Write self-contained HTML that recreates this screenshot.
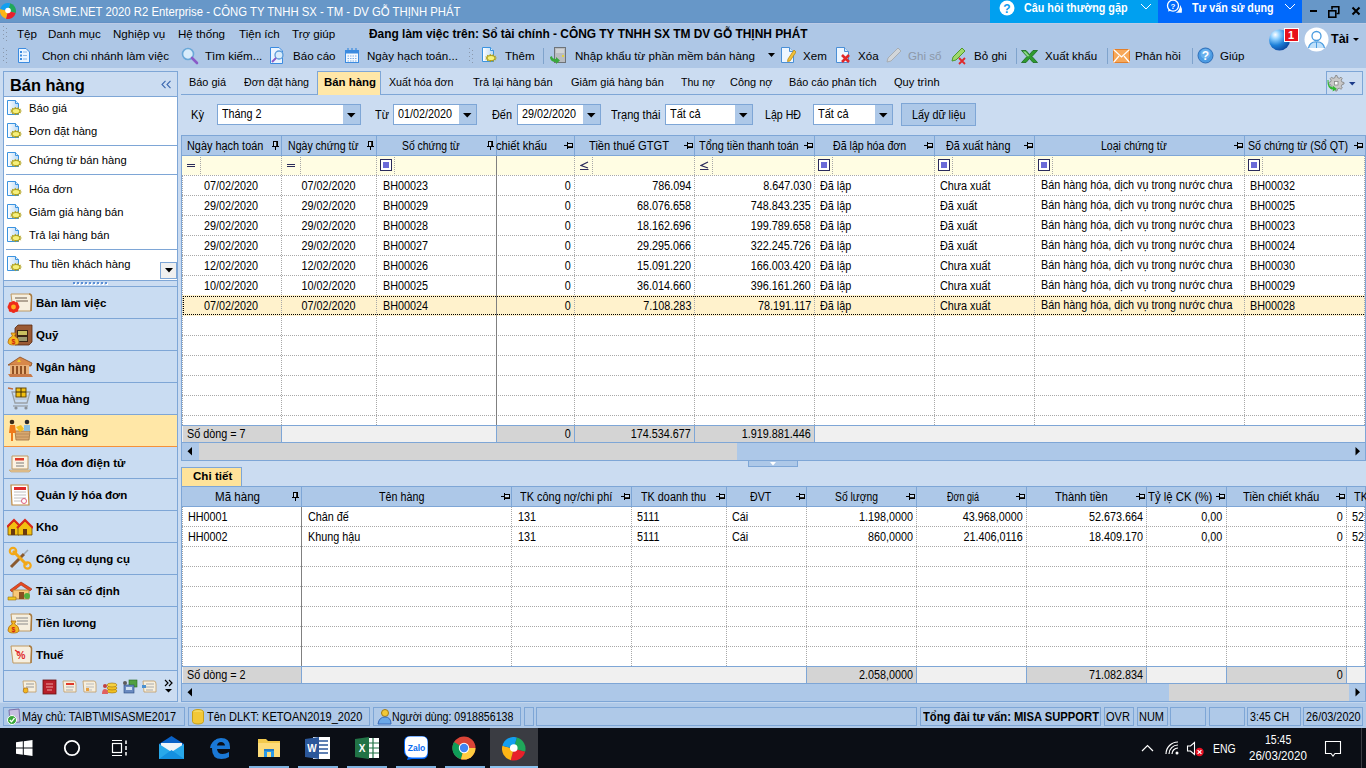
<!DOCTYPE html><html><head><meta charset="utf-8"><style>
*{margin:0;padding:0;box-sizing:border-box}
html,body{width:1366px;height:768px;overflow:hidden;background:#cbdcf1;font-family:"Liberation Sans",sans-serif;font-size:11px;color:#000}
div,span,svg{position:absolute}
span{white-space:nowrap;line-height:1}
.b{font-weight:bold}
.w{color:#fff}
</style></head><body><div style="left:0px;top:0px;width:1366px;height:23px;background:#6797c8"></div>
<div style="left:0px;top:22px;width:990px;height:1px;background:#6290c4"></div>
<svg style="left:0px;top:3px" width="17" height="17" viewBox="0 0 17 17"><g transform="rotate(15 8 8)"><path d="M8 8L8 0A8 8 0 0 1 16 8Z" fill="#1fa85a"/><path d="M8 8L16 8A8 8 0 0 1 8 16Z" fill="#e8202a"/><path d="M8 8L8 16A8 8 0 0 1 0 8Z" fill="#fdb515"/><path d="M8 8L0 8A8 8 0 0 1 8 0Z" fill="#139ff0"/></g><circle cx="8" cy="7.5" r="2.8" fill="#fff"/></svg>
<span style="left:22px;top:6px;font-size:12px;transform:scaleX(0.9435);transform-origin:0 0;color:#fff">MISA SME.NET 2020 R2 Enterprise - CÔNG TY TNHH SX - TM - DV GỖ THỊNH PHÁT</span>
<div style="left:990px;top:0px;width:168px;height:23px;background:#00a0f0"></div>
<div style="left:1158px;top:0px;width:144px;height:23px;background:#0069fc"></div>
<svg style="left:999px;top:0px" width="16" height="16"><circle cx="8" cy="8" r="7.5" fill="#fff"/><text x="8" y="12.5" font-size="12" font-weight="bold" text-anchor="middle" fill="#0d9bf0" font-family="Liberation Sans">?</text></svg>
<span class="b w" style="left:1023.5px;top:2px;font-size:12px;transform:scaleX(0.8985);transform-origin:0 0">Câu hỏi thường gặp</span>
<svg style="left:1140px;top:3px" width="12" height="8"><path d="M1 1L6 6L11 1" stroke="#fff" fill="none" stroke-width="1"/></svg>
<svg style="left:1166px;top:0px" width="18" height="14"><circle cx="7" cy="5.7" r="5.5" stroke="#fff" fill="none" stroke-width="1.3"/><path d="M2.8 8.8L2 11.5L5.8 10.6Z" fill="#fff"/><path d="M14.3 5Q16.8 9 15.8 12.8H9.5Q13.5 11 14.3 5Z" fill="#fff"/><text x="7" y="8.8" font-size="8" font-weight="bold" text-anchor="middle" fill="#fff" font-family="Liberation Sans">?</text></svg>
<span class="b w" style="left:1191.5px;top:2px;font-size:12px;transform:scaleX(0.8919);transform-origin:0 0">Tư vấn sử dụng</span>
<svg style="left:1284px;top:3px" width="12" height="8"><path d="M1 1L6 6L11 1" stroke="#fff" fill="none" stroke-width="1"/></svg>
<div style="left:1310px;top:10px;width:7px;height:2px;background:#000"></div>
<svg style="left:1327px;top:5px" width="14" height="13"><rect x="1.8" y="5.8" width="7" height="6.4" fill="none" stroke="#000" stroke-width="1.6"/><path d="M5 4.5V1.8H11.8V8.5H9.5" fill="none" stroke="#000" stroke-width="1.6"/></svg>
<svg style="left:1351px;top:6px" width="10" height="10"><path d="M1.5 1.5L8.5 8.5M8.5 1.5L1.5 8.5" stroke="#000" stroke-width="2"/></svg>
<div style="left:0px;top:23px;width:1366px;height:45px;background:#aec7e6"></div>
<div style="left:0px;top:23px;width:1366px;height:1px;background:#bccbe6"></div>
<div style="left:3px;top:26px;width:1px;height:1px;background:#8a98ac"></div>
<div style="left:6px;top:28px;width:1px;height:1px;background:#8a98ac"></div>
<div style="left:3px;top:30px;width:1px;height:1px;background:#8a98ac"></div>
<div style="left:6px;top:32px;width:1px;height:1px;background:#8a98ac"></div>
<div style="left:3px;top:34px;width:1px;height:1px;background:#8a98ac"></div>
<div style="left:6px;top:36px;width:1px;height:1px;background:#8a98ac"></div>
<div style="left:3px;top:38px;width:1px;height:1px;background:#8a98ac"></div>
<div style="left:6px;top:40px;width:1px;height:1px;background:#8a98ac"></div>
<div style="left:3px;top:48px;width:1px;height:1px;background:#8a98ac"></div>
<div style="left:6px;top:50px;width:1px;height:1px;background:#8a98ac"></div>
<div style="left:3px;top:52px;width:1px;height:1px;background:#8a98ac"></div>
<div style="left:6px;top:54px;width:1px;height:1px;background:#8a98ac"></div>
<div style="left:3px;top:56px;width:1px;height:1px;background:#8a98ac"></div>
<div style="left:6px;top:58px;width:1px;height:1px;background:#8a98ac"></div>
<div style="left:3px;top:60px;width:1px;height:1px;background:#8a98ac"></div>
<div style="left:6px;top:62px;width:1px;height:1px;background:#8a98ac"></div>
<span style="left:17px;top:28px;font-size:11.6px">Tệp</span>
<span style="left:48px;top:28px;font-size:11.6px">Danh mục</span>
<span style="left:113px;top:28px;font-size:11.6px">Nghiệp vụ</span>
<span style="left:178px;top:28px;font-size:11.6px">Hệ thống</span>
<span style="left:239px;top:28px;font-size:11.6px">Tiện ích</span>
<span style="left:292px;top:28px;font-size:11.6px">Trợ giúp</span>
<span class="b" style="left:369.4px;top:28px;font-size:12px;transform:scaleX(0.9927);transform-origin:0 0">Đang làm việc trên: Sổ tài chính - CÔNG TY TNHH SX TM DV GỖ THỊNH PHÁT</span>
<svg style="left:17px;top:47px" width="14" height="17"><path d="M1.5 1.5H9L12.5 5V15.5H1.5Z" fill="#eaf4ff" stroke="#3b8be0"/><rect x="3" y="4" width="2" height="2" fill="#3b8be0"/><rect x="3" y="7.5" width="2" height="2" fill="#3b8be0"/><rect x="3" y="11" width="2" height="2" fill="#3b8be0"/><path d="M6 5H10M6 8.5H10M6 12H10" stroke="#8ab8e8"/></svg>
<span style="left:42px;top:50px;font-size:11.6px">Chọn chi nhánh làm việc</span>
<span style="left:205px;top:50px;font-size:11.6px">Tìm kiếm...</span>
<span style="left:293px;top:50px;font-size:11.6px">Báo cáo</span>
<span style="left:367px;top:50px;font-size:11.6px">Ngày hạch toán...</span>
<span style="left:505px;top:50px;font-size:11.6px">Thêm</span>
<span style="left:575px;top:50px;font-size:11.6px">Nhập khẩu từ phần mềm bán hàng</span>
<span style="left:803px;top:50px;font-size:11.6px">Xem</span>
<span style="left:858px;top:50px;font-size:11.6px">Xóa</span>
<span style="left:974px;top:50px;font-size:11.6px">Bỏ ghi</span>
<span style="left:1045px;top:50px;font-size:11.6px">Xuất khẩu</span>
<span style="left:1135px;top:50px;font-size:11.6px">Phản hồi</span>
<span style="left:1220px;top:50px;font-size:11.6px">Giúp</span>
<span style="left:908px;top:50px;font-size:11.6px;color:#8c98a8">Ghi sổ</span>
<svg style="left:181px;top:47px" width="18" height="18"><circle cx="7" cy="7" r="5.5" fill="#d8ecfb" stroke="#6aa8d8" stroke-width="1.6"/><path d="M11 11L16 16" stroke="#8a5ac8" stroke-width="2.6" stroke-linecap="round"/></svg>
<svg style="left:269px;top:46px" width="17" height="19"><path d="M1.5 1.5H10L13.5 5V17.5H1.5Z" fill="#eaf4ff" stroke="#3b8be0"/><circle cx="10" cy="9" r="4" fill="#d8ecfb" stroke="#5a9ad8" stroke-width="1.3"/><path d="M7 12L3 16" stroke="#8a5ac8" stroke-width="2"/></svg>
<svg style="left:344px;top:47px" width="16" height="17"><rect x="1.5" y="3.5" width="13" height="12" fill="#f4f9ff" stroke="#3b8be0"/><rect x="1.5" y="3.5" width="13" height="3" fill="#3b8be0"/><path d="M4 1V5M8 1V5M12 1V5" stroke="#3b8be0" stroke-width="1.2"/><path d="M3.5 9H13M3.5 11.5H13M3.5 14H13" stroke="#7eb0e6" stroke-dasharray="1.5 1"/></svg>
<div style="left:469px;top:48px;width:1px;height:1px;background:#8a98ac"></div>
<div style="left:472px;top:50px;width:1px;height:1px;background:#8a98ac"></div>
<div style="left:469px;top:52px;width:1px;height:1px;background:#8a98ac"></div>
<div style="left:472px;top:54px;width:1px;height:1px;background:#8a98ac"></div>
<div style="left:469px;top:56px;width:1px;height:1px;background:#8a98ac"></div>
<div style="left:472px;top:58px;width:1px;height:1px;background:#8a98ac"></div>
<div style="left:469px;top:60px;width:1px;height:1px;background:#8a98ac"></div>
<div style="left:472px;top:62px;width:1px;height:1px;background:#8a98ac"></div>
<svg style="left:482px;top:47px" width="17" height="16"><defs><linearGradient id="dg" x1="0" x2="1"><stop offset="0" stop-color="#ffffff"/><stop offset="1" stop-color="#b8d8f6"/></linearGradient></defs><path d="M.5 .5H8.5L11.5 3.5V14.5H.5Z" fill="url(#dg)" stroke="#3b93e0"/><path d="M8.5 .5V3.5H11.5" fill="#d8ecfb" stroke="#3b93e0"/><path d="M15.30,11.00 L13.13,11.76 L14.30,13.32 L11.82,13.04 L11.62,14.91 L9.61,13.67 L8.10,15.26 L7.21,13.46 L4.87,14.25 L5.38,12.46 L2.96,12.21 L4.70,11.00 L2.96,9.79 L5.38,9.54 L4.87,7.75 L7.21,8.54 L8.10,6.74 L9.61,8.33 L11.62,7.09 L11.82,8.96 L14.30,8.68 L13.13,10.24Z" fill="#b0a018"/><ellipse cx="9" cy="11" rx="3.4" ry="2.1" fill="#f6f07a"/></svg>
<div style="left:543px;top:48px;width:1px;height:16px;background:#7fa3cc"></div>
<svg style="left:548px;top:46px" width="20" height="19"><rect x="6.5" y="1.5" width="11" height="15" fill="#b9bcc0" stroke="#6e7378"/><path d="M8 4H16M8 6H16" stroke="#e7e9ea"/><rect x="14" y="9" width="2" height="2" fill="#e6d23a"/><path d="M2 11 Q2 16 8 16L8 18L12 14.5L8 11V13Q4 13 4 10Z" fill="#39a83c"/></svg>
<svg style="left:768px;top:53px" width="8" height="5"><path d="M0 0H7L3.5 4Z" fill="#000"/></svg>
<svg style="left:780px;top:46px" width="16" height="18"><path d="M1.5 1.5H9.5L13.5 5.5V16.5H1.5Z" fill="#eef6ff" stroke="#4a8fd6"/><path d="M9.5 1.5V5.5H13.5" fill="#cfe3f7" stroke="#4a8fd6"/><path d="M8 13L14 4L16 6L10 15L7.5 15.5Z" fill="#f3c13a" stroke="#b88a14" stroke-width=".8"/></svg>
<svg style="left:835px;top:46px" width="16" height="18"><path d="M1.5 1.5H9.5L13.5 5.5V16.5H1.5Z" fill="#eef6ff" stroke="#4a8fd6"/><path d="M9.5 1.5V5.5H13.5" fill="#cfe3f7" stroke="#4a8fd6"/><path d="M7 9L14 16M14 9L7 16" stroke="#e0282a" stroke-width="2.6"/></svg>
<svg style="left:885px;top:46px" width="17" height="19"><path d="M2 16L3 12L13 2L16 5L6 15Z" fill="#d2d6da" stroke="#a7adb3"/></svg>
<svg style="left:950px;top:46px" width="18" height="20"><path d="M2 15L3 11L12 2L15 5L6 14Z" fill="#9fd86a" stroke="#4f9a2c"/><path d="M9 12L15 18M15 12L9 18" stroke="#e0282a" stroke-width="1.8"/></svg>
<div style="left:1016px;top:48px;width:1px;height:16px;background:#7fa3cc"></div>
<svg style="left:1021px;top:50px" width="18" height="13"><path d="M.5 .5H5L8.5 4.5L12 .5H16.5L11 6.5L16.5 12.5H12L8.5 8.5L5 12.5H.5L6 6.5Z" fill="#2f9a2f" stroke="#1a6a1a" stroke-width=".8"/><path d="M2 1.5H4.5L8.5 6L6.5 6.5Z" fill="#8fd88a"/></svg>
<div style="left:1107px;top:48px;width:1px;height:16px;background:#7fa3cc"></div>
<svg style="left:1113px;top:49px" width="17" height="14"><rect x=".5" y=".5" width="16" height="13" fill="#f7a85a" stroke="#e27f2a"/><path d="M.5 .5L8.5 8L16.5 .5M.5 13.5L6 7M16.5 13.5L11 7" stroke="#fff" fill="none" stroke-width="1.2"/></svg>
<div style="left:1192px;top:48px;width:1px;height:16px;background:#7fa3cc"></div>
<svg style="left:1197px;top:47px" width="17" height="17"><circle cx="8.5" cy="8.5" r="7.5" fill="#4b9be3" stroke="#2f6fb8"/><circle cx="8.5" cy="7" r="5" fill="#7ec0f5" opacity=".6"/><text x="8.5" y="13" font-size="12" font-weight="bold" text-anchor="middle" fill="#fff" font-family="Liberation Sans">?</text></svg>
<svg style="left:1268px;top:29px" width="24" height="22"><defs><radialGradient id="gl" cx=".3" cy=".25" r=".85"><stop offset="0" stop-color="#ffffff"/><stop offset=".25" stop-color="#8fd0ff"/><stop offset=".6" stop-color="#1c7fd8"/><stop offset="1" stop-color="#0a3f98"/></radialGradient></defs><circle cx="11.5" cy="11" r="10.5" fill="url(#gl)"/></svg>
<div style="left:1284px;top:28px;width:15px;height:14px;background:#e8101a;border:1px solid #fff"></div>
<span class="b" style="left:1288px;top:30px;font-size:11px;color:#fff">1</span>
<svg style="left:1304px;top:27px" width="25" height="25"><circle cx="12.5" cy="12.5" r="12" fill="#fff"/><circle cx="12.5" cy="9" r="4.5" fill="none" stroke="#4a9ce0" stroke-width="1.3"/><path d="M4.5 21Q6 14.5 12.5 15Q19 14.5 20.5 21" fill="#bfe0fa" stroke="#4a9ce0" stroke-width="1.2"/><path d="M12.5 15V21" stroke="#4a9ce0"/></svg>
<span class="b" style="left:1331px;top:33px;font-size:12.5px">Tài</span>
<svg style="left:1353px;top:38px" width="7" height="4"><path d="M0 0H6L3 3Z" fill="#000"/></svg>
<div style="left:3px;top:71px;width:175px;height:631px;background:#cbdcf1;border:1px solid #7ea6d6"></div>
<div style="left:4px;top:72px;width:173px;height:24px;background:#cbdcf1"></div>
<span class="b" style="left:10px;top:77px;font-size:16.4px">Bán hàng</span>
<svg style="left:161px;top:80px" width="11" height="9"><path d="M4.5 .8L1 4.5L4.5 8.2M9.5 .8L6 4.5L9.5 8.2" stroke="#3a67b0" fill="none" stroke-width="1.1"/></svg>
<div style="left:4px;top:96px;width:173px;height:1px;background:#7ea6d6"></div>
<div style="left:4px;top:97px;width:173px;height:184px;background:#fff"></div>
<svg style="left:7px;top:100px" width="17" height="16"><defs><linearGradient id="dg" x1="0" x2="1"><stop offset="0" stop-color="#ffffff"/><stop offset="1" stop-color="#b8d8f6"/></linearGradient></defs><path d="M.5 .5H8.5L11.5 3.5V14.5H.5Z" fill="url(#dg)" stroke="#3b93e0"/><path d="M8.5 .5V3.5H11.5" fill="#d8ecfb" stroke="#3b93e0"/><path d="M15.30,11.00 L13.13,11.76 L14.30,13.32 L11.82,13.04 L11.62,14.91 L9.61,13.67 L8.10,15.26 L7.21,13.46 L4.87,14.25 L5.38,12.46 L2.96,12.21 L4.70,11.00 L2.96,9.79 L5.38,9.54 L4.87,7.75 L7.21,8.54 L8.10,6.74 L9.61,8.33 L11.62,7.09 L11.82,8.96 L14.30,8.68 L13.13,10.24Z" fill="#b0a018"/><ellipse cx="9" cy="11" rx="3.4" ry="2.1" fill="#f6f07a"/></svg>
<span style="left:29px;top:103px;font-size:11.2px">Báo giá</span>
<svg style="left:7px;top:123px" width="17" height="16"><defs><linearGradient id="dg" x1="0" x2="1"><stop offset="0" stop-color="#ffffff"/><stop offset="1" stop-color="#b8d8f6"/></linearGradient></defs><path d="M.5 .5H8.5L11.5 3.5V14.5H.5Z" fill="url(#dg)" stroke="#3b93e0"/><path d="M8.5 .5V3.5H11.5" fill="#d8ecfb" stroke="#3b93e0"/><path d="M15.30,11.00 L13.13,11.76 L14.30,13.32 L11.82,13.04 L11.62,14.91 L9.61,13.67 L8.10,15.26 L7.21,13.46 L4.87,14.25 L5.38,12.46 L2.96,12.21 L4.70,11.00 L2.96,9.79 L5.38,9.54 L4.87,7.75 L7.21,8.54 L8.10,6.74 L9.61,8.33 L11.62,7.09 L11.82,8.96 L14.30,8.68 L13.13,10.24Z" fill="#b0a018"/><ellipse cx="9" cy="11" rx="3.4" ry="2.1" fill="#f6f07a"/></svg>
<span style="left:29px;top:126px;font-size:11.2px">Đơn đặt hàng</span>
<svg style="left:7px;top:152px" width="17" height="16"><defs><linearGradient id="dg" x1="0" x2="1"><stop offset="0" stop-color="#ffffff"/><stop offset="1" stop-color="#b8d8f6"/></linearGradient></defs><path d="M.5 .5H8.5L11.5 3.5V14.5H.5Z" fill="url(#dg)" stroke="#3b93e0"/><path d="M8.5 .5V3.5H11.5" fill="#d8ecfb" stroke="#3b93e0"/><path d="M15.30,11.00 L13.13,11.76 L14.30,13.32 L11.82,13.04 L11.62,14.91 L9.61,13.67 L8.10,15.26 L7.21,13.46 L4.87,14.25 L5.38,12.46 L2.96,12.21 L4.70,11.00 L2.96,9.79 L5.38,9.54 L4.87,7.75 L7.21,8.54 L8.10,6.74 L9.61,8.33 L11.62,7.09 L11.82,8.96 L14.30,8.68 L13.13,10.24Z" fill="#b0a018"/><ellipse cx="9" cy="11" rx="3.4" ry="2.1" fill="#f6f07a"/></svg>
<span style="left:29px;top:155px;font-size:11.2px">Chứng từ bán hàng</span>
<svg style="left:7px;top:181px" width="17" height="16"><defs><linearGradient id="dg" x1="0" x2="1"><stop offset="0" stop-color="#ffffff"/><stop offset="1" stop-color="#b8d8f6"/></linearGradient></defs><path d="M.5 .5H8.5L11.5 3.5V14.5H.5Z" fill="url(#dg)" stroke="#3b93e0"/><path d="M8.5 .5V3.5H11.5" fill="#d8ecfb" stroke="#3b93e0"/><path d="M15.30,11.00 L13.13,11.76 L14.30,13.32 L11.82,13.04 L11.62,14.91 L9.61,13.67 L8.10,15.26 L7.21,13.46 L4.87,14.25 L5.38,12.46 L2.96,12.21 L4.70,11.00 L2.96,9.79 L5.38,9.54 L4.87,7.75 L7.21,8.54 L8.10,6.74 L9.61,8.33 L11.62,7.09 L11.82,8.96 L14.30,8.68 L13.13,10.24Z" fill="#b0a018"/><ellipse cx="9" cy="11" rx="3.4" ry="2.1" fill="#f6f07a"/></svg>
<span style="left:29px;top:184px;font-size:11.2px">Hóa đơn</span>
<svg style="left:7px;top:204px" width="17" height="16"><defs><linearGradient id="dg" x1="0" x2="1"><stop offset="0" stop-color="#ffffff"/><stop offset="1" stop-color="#b8d8f6"/></linearGradient></defs><path d="M.5 .5H8.5L11.5 3.5V14.5H.5Z" fill="url(#dg)" stroke="#3b93e0"/><path d="M8.5 .5V3.5H11.5" fill="#d8ecfb" stroke="#3b93e0"/><path d="M15.30,11.00 L13.13,11.76 L14.30,13.32 L11.82,13.04 L11.62,14.91 L9.61,13.67 L8.10,15.26 L7.21,13.46 L4.87,14.25 L5.38,12.46 L2.96,12.21 L4.70,11.00 L2.96,9.79 L5.38,9.54 L4.87,7.75 L7.21,8.54 L8.10,6.74 L9.61,8.33 L11.62,7.09 L11.82,8.96 L14.30,8.68 L13.13,10.24Z" fill="#b0a018"/><ellipse cx="9" cy="11" rx="3.4" ry="2.1" fill="#f6f07a"/></svg>
<span style="left:29px;top:207px;font-size:11.2px">Giảm giá hàng bán</span>
<svg style="left:7px;top:227px" width="17" height="16"><defs><linearGradient id="dg" x1="0" x2="1"><stop offset="0" stop-color="#ffffff"/><stop offset="1" stop-color="#b8d8f6"/></linearGradient></defs><path d="M.5 .5H8.5L11.5 3.5V14.5H.5Z" fill="url(#dg)" stroke="#3b93e0"/><path d="M8.5 .5V3.5H11.5" fill="#d8ecfb" stroke="#3b93e0"/><path d="M15.30,11.00 L13.13,11.76 L14.30,13.32 L11.82,13.04 L11.62,14.91 L9.61,13.67 L8.10,15.26 L7.21,13.46 L4.87,14.25 L5.38,12.46 L2.96,12.21 L4.70,11.00 L2.96,9.79 L5.38,9.54 L4.87,7.75 L7.21,8.54 L8.10,6.74 L9.61,8.33 L11.62,7.09 L11.82,8.96 L14.30,8.68 L13.13,10.24Z" fill="#b0a018"/><ellipse cx="9" cy="11" rx="3.4" ry="2.1" fill="#f6f07a"/></svg>
<span style="left:29px;top:230px;font-size:11.2px">Trả lại hàng bán</span>
<svg style="left:7px;top:256px" width="17" height="16"><defs><linearGradient id="dg" x1="0" x2="1"><stop offset="0" stop-color="#ffffff"/><stop offset="1" stop-color="#b8d8f6"/></linearGradient></defs><path d="M.5 .5H8.5L11.5 3.5V14.5H.5Z" fill="url(#dg)" stroke="#3b93e0"/><path d="M8.5 .5V3.5H11.5" fill="#d8ecfb" stroke="#3b93e0"/><path d="M15.30,11.00 L13.13,11.76 L14.30,13.32 L11.82,13.04 L11.62,14.91 L9.61,13.67 L8.10,15.26 L7.21,13.46 L4.87,14.25 L5.38,12.46 L2.96,12.21 L4.70,11.00 L2.96,9.79 L5.38,9.54 L4.87,7.75 L7.21,8.54 L8.10,6.74 L9.61,8.33 L11.62,7.09 L11.82,8.96 L14.30,8.68 L13.13,10.24Z" fill="#b0a018"/><ellipse cx="9" cy="11" rx="3.4" ry="2.1" fill="#f6f07a"/></svg>
<span style="left:29px;top:259px;font-size:11.2px">Thu tiền khách hàng</span>
<div style="left:6px;top:145px;width:171px;height:1px;background:#7ea6d6"></div>
<div style="left:6px;top:174px;width:171px;height:1px;background:#7ea6d6"></div>
<div style="left:6px;top:249px;width:171px;height:1px;background:#7ea6d6"></div>
<div style="left:160px;top:262px;width:17px;height:17px;background:#f0f0f0;border:1px solid #7ea6d6"></div>
<svg style="left:165px;top:268px" width="9" height="5"><path d="M0 0H8L4 4.5Z" fill="#000"/></svg>
<div style="left:4px;top:280px;width:173px;height:1px;background:#7ea6d6"></div>
<div style="left:4px;top:281px;width:173px;height:5px;background:#cbdcf1"></div>
<div style="left:74px;top:283px;width:2px;height:2px;background:#fff"></div>
<div style="left:73px;top:282px;width:2px;height:2px;background:#5b8fd6"></div>
<div style="left:78px;top:283px;width:2px;height:2px;background:#fff"></div>
<div style="left:77px;top:282px;width:2px;height:2px;background:#5b8fd6"></div>
<div style="left:82px;top:283px;width:2px;height:2px;background:#fff"></div>
<div style="left:81px;top:282px;width:2px;height:2px;background:#5b8fd6"></div>
<div style="left:86px;top:283px;width:2px;height:2px;background:#fff"></div>
<div style="left:85px;top:282px;width:2px;height:2px;background:#5b8fd6"></div>
<div style="left:90px;top:283px;width:2px;height:2px;background:#fff"></div>
<div style="left:89px;top:282px;width:2px;height:2px;background:#5b8fd6"></div>
<div style="left:94px;top:283px;width:2px;height:2px;background:#fff"></div>
<div style="left:93px;top:282px;width:2px;height:2px;background:#5b8fd6"></div>
<div style="left:98px;top:283px;width:2px;height:2px;background:#fff"></div>
<div style="left:97px;top:282px;width:2px;height:2px;background:#5b8fd6"></div>
<div style="left:102px;top:283px;width:2px;height:2px;background:#fff"></div>
<div style="left:101px;top:282px;width:2px;height:2px;background:#5b8fd6"></div>
<div style="left:106px;top:283px;width:2px;height:2px;background:#fff"></div>
<div style="left:105px;top:282px;width:2px;height:2px;background:#5b8fd6"></div>
<div style="left:4px;top:286px;width:173px;height:32px;background:#c9dcf2;border-top:1px solid #7ea6d6"></div>
<svg style="left:7px;top:290px" width="26" height="25"><path d="M4 4H22Q25 4 24.5 8L24 21H6Z" fill="#f6efdf" stroke="#c09a62"/><path d="M22 4Q25 4 24.5 8L24 21" fill="none" stroke="#a87a40" stroke-width="1.5"/><path d="M8 8H20M9 11H21" stroke="#6a5a4a" stroke-width="1.2"/><circle cx="10.22" cy="17.00" r="2.28" fill="#ee2a1a"/><circle cx="9.13" cy="19.63" r="2.28" fill="#ee2a1a"/><circle cx="6.50" cy="20.72" r="2.28" fill="#ee2a1a"/><circle cx="3.87" cy="19.63" r="2.28" fill="#ee2a1a"/><circle cx="2.78" cy="17.00" r="2.28" fill="#ee2a1a"/><circle cx="3.87" cy="14.37" r="2.28" fill="#ee2a1a"/><circle cx="6.50" cy="13.28" r="2.28" fill="#ee2a1a"/><circle cx="9.13" cy="14.37" r="2.28" fill="#ee2a1a"/><circle cx="6.5" cy="17" r="2.40" fill="#ffb020"/></svg>
<span class="b" style="left:36px;top:298px;font-size:11.5px">Bàn làm việc</span>
<div style="left:4px;top:318px;width:173px;height:32px;background:#c9dcf2;border-top:1px solid #7ea6d6"></div>
<svg style="left:7px;top:322px" width="26" height="25"><path d="M8 6L11 3H25V20L22 23H8Z" fill="#9a5a34" stroke="#5a2a10" stroke-width=".8"/><rect x="10" y="8" width="11" height="12" fill="#3a2414"/><rect x="11" y="9" width="9" height="4" fill="#c8c060"/><rect x="11" y="15" width="9" height="4" fill="#9a9a70"/><path d="M4 11L9 11L7.5 14Q12 16 12 20Q12 23 6.5 23Q1 23 1 20Q1 16 5.5 14Z" fill="#f4b820" stroke="#b06a10" stroke-width=".8"/><text x="6.5" y="22" font-size="7" font-weight="bold" text-anchor="middle" fill="#d02010" font-family="Liberation Sans">$</text></svg>
<span class="b" style="left:36px;top:330px;font-size:11.5px">Quỹ</span>
<div style="left:4px;top:350px;width:173px;height:32px;background:#c9dcf2;border-top:1px solid #7ea6d6"></div>
<svg style="left:7px;top:354px" width="26" height="25"><path d="M1 11L13 3L25 9L24 12Z" fill="#d8884a" stroke="#8a4a1a" stroke-width=".8"/><path d="M3 11H22V20H3Z" fill="#e8b078"/><path d="M6 12V20M10 12V20M14 12V20M18 12V20" stroke="#7a3a10" stroke-width="1.6"/><path d="M1 20H24L26 23H3Z" fill="#c87a48"/><path d="M12 5L14 8L10 8Z" fill="#f0d020"/></svg>
<span class="b" style="left:36px;top:362px;font-size:11.5px">Ngân hàng</span>
<div style="left:4px;top:382px;width:173px;height:32px;background:#c9dcf2;border-top:1px solid #7ea6d6"></div>
<svg style="left:7px;top:386px" width="26" height="25"><path d="M1 2L6 3" stroke="#c06a40" stroke-width="1.5"/><path d="M5 6H23L20 17H8Z" fill="none" stroke="#9aa0a6" stroke-width="1.3"/><path d="M7 10H22M8 13H21" stroke="#b8bcc0"/><rect x="9" y="2" width="10" height="9" fill="#f2c010" stroke="#6a4a08"/><path d="M14 2V11M9 6H19" stroke="#3a2a08"/><path d="M6 20H21" stroke="#9aa0a6" stroke-width="1.3"/><circle cx="9" cy="22" r="1.6" fill="#8a9096"/><circle cx="19" cy="22" r="1.6" fill="#8a9096"/></svg>
<span class="b" style="left:36px;top:394px;font-size:11.5px">Mua hàng</span>
<div style="left:4px;top:414px;width:173px;height:32px;background:#ffe7a7;border-top:1px solid #7ea6d6"></div>
<svg style="left:7px;top:418px" width="26" height="25"><path d="M8 13H23L22 22H9Z" fill="#d8a870" stroke="#a07040" stroke-width=".8"/><path d="M9 16H22M9 19H22" stroke="#b88a58"/><circle cx="5" cy="4" r="2.3" fill="#3a2a1a"/><path d="M3 7H8L9 15H6V23H4V15H2Z" fill="#ee7a1a"/><circle cx="20" cy="4" r="2.3" fill="#2a2a2a"/><path d="M17 7H23V13H17Z" fill="#8ac0e0"/><path d="M9 9L14 7L17 11L13 14Z" fill="#f2c020"/></svg>
<span class="b" style="left:36px;top:426px;font-size:11.5px">Bán hàng</span>
<div style="left:4px;top:446px;width:173px;height:32px;background:#c9dcf2;border-top:1px solid #7ea6d6"></div>
<svg style="left:7px;top:450px" width="26" height="25"><path d="M5 6H21V19H5Z" fill="#fbf2e2" stroke="#c09a62"/><rect x="8" y="8" width="9" height="2.5" fill="#e03a2a"/><path d="M9 13H17M9 16H17" stroke="#7a7a7a"/><path d="M2 20H24L22 22H4Z" fill="#e8c898" stroke="#c09a62" stroke-width=".6"/></svg>
<span class="b" style="left:36px;top:458px;font-size:11.5px">Hóa đơn điện tử</span>
<div style="left:4px;top:478px;width:173px;height:32px;background:#c9dcf2;border-top:1px solid #7ea6d6"></div>
<svg style="left:7px;top:482px" width="26" height="25"><path d="M4 3H21L22 23H5Z" fill="#fff" stroke="#c08a40" stroke-width="1.2"/><rect x="7" y="5" width="12" height="3" fill="#e02a2a"/><path d="M7 10H19M7 13H19M7 16H19M7 19H15" stroke="#c0c0c0"/><circle cx="17" cy="19" r="2.5" fill="none" stroke="#e06080"/></svg>
<span class="b" style="left:36px;top:490px;font-size:11.5px">Quản lý hóa đơn</span>
<div style="left:4px;top:510px;width:173px;height:32px;background:#c9dcf2;border-top:1px solid #7ea6d6"></div>
<svg style="left:7px;top:514px" width="26" height="25"><path d="M1 13L7 7L12 12V21H1Z" fill="#f2c010" stroke="#6a4a08" stroke-width=".8"/><path d="M0 13L7 6L13 12" stroke="#d82a1a" stroke-width="2" fill="none"/><path d="M11 14L18 7L25 13V21H11Z" fill="#f2c010" stroke="#6a4a08" stroke-width=".8"/><path d="M10 14L18 6L26 14" stroke="#d82a1a" stroke-width="2.2" fill="none"/><rect x="4" y="15" width="4" height="6" fill="#6a3a10"/><rect x="16" y="15" width="4" height="6" fill="#6a3a10"/></svg>
<span class="b" style="left:36px;top:522px;font-size:11.5px">Kho</span>
<div style="left:4px;top:542px;width:173px;height:32px;background:#c9dcf2;border-top:1px solid #7ea6d6"></div>
<svg style="left:7px;top:546px" width="26" height="25"><path d="M4 21L17 8" stroke="#8a5a30" stroke-width="3"/><path d="M17 8L21 4" stroke="#a0a8b0" stroke-width="1.6"/><path d="M6 5L20 19" stroke="#f2a818" stroke-width="3"/><circle cx="6" cy="5" r="3.2" fill="none" stroke="#f2a818" stroke-width="2.2"/><circle cx="20.5" cy="19.5" r="3.2" fill="none" stroke="#f2a818" stroke-width="2.2"/></svg>
<span class="b" style="left:36px;top:554px;font-size:11.5px">Công cụ dụng cụ</span>
<div style="left:4px;top:574px;width:173px;height:32px;background:#c9dcf2;border-top:1px solid #7ea6d6"></div>
<svg style="left:7px;top:578px" width="26" height="25"><path d="M3 12L14 4L25 11L23 13L14 7L5 14Z" fill="#e84a20" stroke="#9a2a10" stroke-width=".6"/><path d="M6 12H22V21H6Z" fill="#f8c878" stroke="#b0782a" stroke-width=".8"/><rect x="12" y="14" width="5" height="7" fill="#8a5020"/><path d="M1 19H9V22H1Z" fill="#f2c820" stroke="#9a7010" stroke-width=".6"/><circle cx="20" cy="18" r="3" fill="#50b040"/></svg>
<span class="b" style="left:36px;top:586px;font-size:11.5px">Tài sản cố định</span>
<div style="left:4px;top:606px;width:173px;height:32px;background:#c9dcf2;border-top:1px solid #7ea6d6"></div>
<svg style="left:7px;top:610px" width="26" height="25"><path d="M4 4H22Q25 4 24.5 8L24 21H6Z" fill="#f6efdf" stroke="#c09a62"/><path d="M22 4Q25 4 24.5 8L24 21" fill="none" stroke="#a87a40" stroke-width="1.5"/><path d="M9 8H21M10 11H21M10 14H21" stroke="#8a8a8a"/><path d="M4 11L9 11L7.5 14Q12 16 12 20Q12 23 6.5 23Q1 23 1 20Q1 16 5.5 14Z" fill="#f4b820" stroke="#b06a10" stroke-width=".8"/><text x="6.5" y="22" font-size="7" font-weight="bold" text-anchor="middle" fill="#d02010" font-family="Liberation Sans">$</text></svg>
<span class="b" style="left:36px;top:618px;font-size:11.5px">Tiền lương</span>
<div style="left:4px;top:638px;width:173px;height:32px;background:#c9dcf2;border-top:1px solid #7ea6d6"></div>
<svg style="left:7px;top:642px" width="26" height="25"><path d="M4 4H22Q25 4 24.5 8L24 21H6Z" fill="#f6efdf" stroke="#c09a62"/><path d="M22 4Q25 4 24.5 8L24 21" fill="none" stroke="#a87a40" stroke-width="1.5"/><text x="14" y="17" font-size="10" font-weight="bold" text-anchor="middle" fill="#e02a2a" font-family="Liberation Sans">%</text><path d="M8 8L12 11" stroke="#e02a2a" stroke-width="1.3"/></svg>
<span class="b" style="left:36px;top:650px;font-size:11.5px">Thuế</span>
<div style="left:4px;top:670px;width:173px;height:1px;background:#7ea6d6"></div>
<div style="left:4px;top:446px;width:173px;height:1px;background:#f5913a"></div>
<svg style="left:21px;top:678px" width="17" height="17"><path d="M2 3H13Q15 3 15 6V14H3Z" fill="#f6efdf" stroke="#c09a62" stroke-width=".8"/><path d="M5 6H13M5 9H13" stroke="#999"/><path d="M3 10Q1 15 4.5 15Q8 15 6.5 10Z" fill="#f4b820" stroke="#9a5a10" stroke-width=".6"/></svg>
<svg style="left:41px;top:678px" width="17" height="17"><rect x="2" y="2" width="13" height="14" fill="#b8202a" stroke="#6a1010" stroke-width=".8"/><path d="M5 6H12M5 9H12M6 12H11" stroke="#f0a0a0"/></svg>
<svg style="left:61px;top:678px" width="17" height="17"><path d="M2 3H13Q15 3 15 6V14H3Z" fill="#f6efdf" stroke="#c09a62" stroke-width=".8"/><rect x="5" y="5" width="8" height="2" fill="#e03a2a"/><path d="M5 9H13M5 12H12" stroke="#aaa"/></svg>
<svg style="left:81px;top:678px" width="17" height="17"><path d="M2 3H13Q15 3 15 6V14H3Z" fill="#f6efdf" stroke="#c09a62" stroke-width=".8"/><path d="M5 6H13M5 9H13M5 12H11" stroke="#bbb"/><rect x="5" y="10" width="3" height="3" fill="#e8a040"/></svg>
<svg style="left:101px;top:678px" width="17" height="17"><ellipse cx="11" cy="13" rx="5" ry="2" fill="#f2c020" stroke="#9a7010" stroke-width=".6"/><ellipse cx="11" cy="10" rx="5" ry="2" fill="#f2c020" stroke="#9a7010" stroke-width=".6"/><ellipse cx="11" cy="7" rx="5" ry="2" fill="#f6d040" stroke="#9a7010" stroke-width=".6"/><circle cx="4" cy="8" r="2" fill="#c04040"/><path d="M1 16Q1 11 4 11Q7 11 7 16Z" fill="#e06060"/></svg>
<svg style="left:121px;top:678px" width="17" height="17"><rect x="8" y="2" width="8" height="7" fill="#50a040" stroke="#2a6a20" stroke-width=".6"/><rect x="3" y="7" width="10" height="8" fill="#6a8ac0" stroke="#2a4a80" stroke-width=".6"/><rect x="5" y="9" width="6" height="3" fill="#d0e0f0"/><circle cx="4" cy="5" r="2" fill="#5a5a5a"/></svg>
<svg style="left:141px;top:678px" width="17" height="17"><path d="M2 3H13Q15 3 15 6V14H3Z" fill="#f6efdf" stroke="#c09a62" stroke-width=".8"/><path d="M5 6H13M5 9H13M5 12H12" stroke="#aaa"/><rect x="1" y="7" width="4" height="3" fill="#4a90d0"/></svg>
<svg style="left:164px;top:679px" width="9" height="14"><path d="M1 1L4 4L1 7M5 1L8 4L5 7" stroke="#000" fill="none" stroke-width="1.2"/><path d="M1 10H8L4.5 13.5Z" fill="#000"/></svg>
<div style="left:181px;top:94px;width:1182px;height:1px;background:#7ea6d6"></div>
<div style="left:317px;top:71px;width:64px;height:24px;background:#ffe7a7;border:1px solid #7ea6d6;border-bottom:none"></div>
<span class="b" style="left:324px;top:77px;font-size:11.8px;transform:scaleX(0.9674);transform-origin:0 0">Bán hàng</span>
<span style="left:189.4px;top:77px;font-size:11.8px;transform:scaleX(0.9246);transform-origin:0 0">Báo giá</span>
<span style="left:243.7px;top:77px;font-size:11.8px;transform:scaleX(0.9024);transform-origin:0 0">Đơn đặt hàng</span>
<span style="left:389.3px;top:77px;font-size:11.8px;transform:scaleX(0.9023);transform-origin:0 0">Xuất hóa đơn</span>
<span style="left:472.8px;top:77px;font-size:11.8px;transform:scaleX(0.9383);transform-origin:0 0">Trả lại hàng bán</span>
<span style="left:570.9px;top:77px;font-size:11.8px;transform:scaleX(0.9308);transform-origin:0 0">Giảm giá hàng bán</span>
<span style="left:681.4px;top:77px;font-size:11.8px;transform:scaleX(0.8969);transform-origin:0 0">Thu nợ</span>
<span style="left:730.2px;top:77px;font-size:11.8px;transform:scaleX(0.9282);transform-origin:0 0">Công nợ</span>
<span style="left:789.2px;top:77px;font-size:11.8px;transform:scaleX(0.9199);transform-origin:0 0">Báo cáo phân tích</span>
<span style="left:894.2px;top:77px;font-size:11.8px;transform:scaleX(0.9397);transform-origin:0 0">Quy trình</span>
<div style="left:1326px;top:71px;width:37px;height:24px;border:1px solid #7ea6d6;border-bottom:none"></div>
<svg style="left:1327px;top:74px" width="18" height="18"><path d="M8.5 1.5L10 1.5L10.5 3.5L12.3 4.3L14 3.2L15.2 4.4L14.2 6.2L14.9 8L17 8.5V10L15 10.5L14.3 12.3L15.3 14L14.1 15.2L12.3 14.2L10.5 14.9L10 17H8.5L8 15L6.2 14.2L4.5 15.3L3.3 14.1L4.3 12.3L3.6 10.5L1.5 10V8.5L3.5 8L4.2 6.2L3.2 4.5L4.4 3.3L6.2 4.3L8 3.6Z" fill="#c8c8c8" stroke="#888" stroke-width=".9"/><rect x="7.5" y="7.5" width="3.5" height="3.5" fill="#fff" stroke="#888" stroke-width=".8"/><path d="M1.5 6Q1 13 6 13.5L5.5 11.5L10 15L5.5 17.5L6 15.5Q0 15 .5 6Z" fill="#30b830"/></svg>
<svg style="left:1349px;top:82px" width="7" height="4"><path d="M0 0H6.5L3.25 3.5Z" fill="#1a3a8a"/></svg>
<span style="left:191px;top:109px;font-size:12px;transform:scaleX(0.9283);transform-origin:0 0">Kỳ</span>
<div style="left:217px;top:104px;width:144px;height:21px;background:#fff;border:1px solid #7ea6d6"></div>
<div style="left:343px;top:105px;width:17px;height:19px;background:#adc8e8"></div>
<svg style="left:347px;top:113px" width="9" height="5"><path d="M0 0H8.5L4.25 4.5Z" fill="#000"/></svg>
<span style="left:222px;top:107.5px;font-size:12px;transform:scaleX(0.8994);transform-origin:0 0">Tháng 2</span>
<span style="left:375px;top:109px;font-size:12px;transform:scaleX(0.9113);transform-origin:0 0">Từ</span>
<div style="left:393px;top:104px;width:84px;height:21px;background:#fff;border:1px solid #7ea6d6"></div>
<div style="left:459px;top:105px;width:17px;height:19px;background:#adc8e8"></div>
<svg style="left:463px;top:113px" width="9" height="5"><path d="M0 0H8.5L4.25 4.5Z" fill="#000"/></svg>
<span style="left:398px;top:107.5px;font-size:12px;transform:scaleX(0.8992);transform-origin:0 0">01/02/2020</span>
<span style="left:492px;top:109px;font-size:12px;transform:scaleX(0.9086);transform-origin:0 0">Đến</span>
<div style="left:517px;top:104px;width:84px;height:21px;background:#fff;border:1px solid #7ea6d6"></div>
<div style="left:583px;top:105px;width:17px;height:19px;background:#adc8e8"></div>
<svg style="left:587px;top:113px" width="9" height="5"><path d="M0 0H8.5L4.25 4.5Z" fill="#000"/></svg>
<span style="left:522px;top:107.5px;font-size:12px;transform:scaleX(0.8992);transform-origin:0 0">29/02/2020</span>
<span style="left:611px;top:109px;font-size:12px;transform:scaleX(0.9220);transform-origin:0 0">Trạng thái</span>
<div style="left:665px;top:104px;width:88px;height:21px;background:#fff;border:1px solid #7ea6d6"></div>
<div style="left:735px;top:105px;width:17px;height:19px;background:#adc8e8"></div>
<svg style="left:739px;top:113px" width="9" height="5"><path d="M0 0H8.5L4.25 4.5Z" fill="#000"/></svg>
<span style="left:670px;top:107.5px;font-size:12px;transform:scaleX(0.9147);transform-origin:0 0">Tất cả</span>
<span style="left:765px;top:109px;font-size:12px;transform:scaleX(0.8848);transform-origin:0 0">Lập HĐ</span>
<div style="left:813px;top:104px;width:80px;height:21px;background:#fff;border:1px solid #7ea6d6"></div>
<div style="left:875px;top:105px;width:17px;height:19px;background:#adc8e8"></div>
<svg style="left:879px;top:113px" width="9" height="5"><path d="M0 0H8.5L4.25 4.5Z" fill="#000"/></svg>
<span style="left:818px;top:107.5px;font-size:12px;transform:scaleX(0.9177);transform-origin:0 0">Tất cả</span>
<div style="left:901px;top:103px;width:75px;height:23px;background:#adc8e8;border:1px solid #7ea6d6"></div>
<span style="left:912px;top:109px;font-size:12px;transform:scaleX(0.8990);transform-origin:0 0">Lấy dữ liệu</span>
<div style="left:181px;top:135px;width:1185px;height:326px;background:#fff;border:1px solid #7ea6d6"></div>
<div style="left:182px;top:136px;width:1183px;height:19px;background:#adc8e8"></div>
<div style="left:182px;top:155px;width:1183px;height:1px;background:#7ea6d6"></div>
<div style="left:281px;top:136px;width:1px;height:19px;background:#7ea6d6"></div>
<div style="left:376px;top:136px;width:1px;height:19px;background:#7ea6d6"></div>
<div style="left:496px;top:136px;width:1px;height:19px;background:#7ea6d6"></div>
<div style="left:574px;top:136px;width:1px;height:19px;background:#7ea6d6"></div>
<div style="left:694px;top:136px;width:1px;height:19px;background:#7ea6d6"></div>
<div style="left:814px;top:136px;width:1px;height:19px;background:#7ea6d6"></div>
<div style="left:934px;top:136px;width:1px;height:19px;background:#7ea6d6"></div>
<div style="left:1034px;top:136px;width:1px;height:19px;background:#7ea6d6"></div>
<div style="left:1244px;top:136px;width:1px;height:19px;background:#7ea6d6"></div>
<span style="left:187.4px;top:140px;font-size:12px;transform:scaleX(0.9077659795960858);transform-origin:0 0;">Ngày hạch toán</span>
<svg style="left:272px;top:141px;shape-rendering:crispEdges" width="7" height="9"><rect x="1" y="0" width="5" height="5" fill="#000"/><rect x="2" y="1" width="2" height="4" fill="#c8dcf4"/><rect x="4" y="1" width="1" height="4" fill="#3a3428"/><rect x="0" y="5" width="7" height="1" fill="#000"/><rect x="3" y="6" width="1" height="3" fill="#000"/></svg>
<span style="left:288.3px;top:140px;font-size:12px;transform:scaleX(0.8801704159741568);transform-origin:0 0;">Ngày chứng từ</span>
<svg style="left:367px;top:141px;shape-rendering:crispEdges" width="7" height="9"><rect x="1" y="0" width="5" height="5" fill="#000"/><rect x="2" y="1" width="2" height="4" fill="#c8dcf4"/><rect x="4" y="1" width="1" height="4" fill="#3a3428"/><rect x="0" y="5" width="7" height="1" fill="#000"/><rect x="3" y="6" width="1" height="3" fill="#000"/></svg>
<span style="left:402px;top:140px;font-size:12px;transform:scaleX(0.8657473717714681);transform-origin:0 0;">Số chứng từ</span>
<svg style="left:487px;top:141px;shape-rendering:crispEdges" width="7" height="9"><rect x="1" y="0" width="5" height="5" fill="#000"/><rect x="2" y="1" width="2" height="4" fill="#c8dcf4"/><rect x="4" y="1" width="1" height="4" fill="#3a3428"/><rect x="0" y="5" width="7" height="1" fill="#000"/><rect x="3" y="6" width="1" height="3" fill="#000"/></svg>
<span style="left:496px;top:140px;font-size:12px;transform:scaleX(0.9323689713090871);transform-origin:0 0;">chiết khấu</span>
<svg style="left:564px;top:142px;shape-rendering:crispEdges" width="9" height="7"><rect x="0" y="3" width="3" height="1" fill="#000"/><rect x="3" y="0" width="1" height="7" fill="#000"/><rect x="4" y="1" width="5" height="5" fill="#000"/><rect x="4" y="2" width="4" height="2" fill="#c8dcf4"/><rect x="4" y="4" width="4" height="1" fill="#3a3428"/></svg>
<span style="left:589px;top:140px;font-size:12px;transform:scaleX(0.9275967273227964);transform-origin:0 0;">Tiền thuế GTGT</span>
<svg style="left:684px;top:142px;shape-rendering:crispEdges" width="9" height="7"><rect x="0" y="3" width="3" height="1" fill="#000"/><rect x="3" y="0" width="1" height="7" fill="#000"/><rect x="4" y="1" width="5" height="5" fill="#000"/><rect x="4" y="2" width="4" height="2" fill="#c8dcf4"/><rect x="4" y="4" width="4" height="1" fill="#3a3428"/></svg>
<span style="left:699px;top:140px;font-size:12px;transform:scaleX(0.9048324731292691);transform-origin:0 0;">Tổng tiền thanh toán</span>
<svg style="left:804px;top:142px;shape-rendering:crispEdges" width="9" height="7"><rect x="0" y="3" width="3" height="1" fill="#000"/><rect x="3" y="0" width="1" height="7" fill="#000"/><rect x="4" y="1" width="5" height="5" fill="#000"/><rect x="4" y="2" width="4" height="2" fill="#c8dcf4"/><rect x="4" y="4" width="4" height="1" fill="#3a3428"/></svg>
<span style="left:832.6px;top:140px;font-size:12px;transform:scaleX(0.8863259699866052);transform-origin:0 0;">Đã lập hóa đơn</span>
<svg style="left:924px;top:142px;shape-rendering:crispEdges" width="9" height="7"><rect x="0" y="3" width="3" height="1" fill="#000"/><rect x="3" y="0" width="1" height="7" fill="#000"/><rect x="4" y="1" width="5" height="5" fill="#000"/><rect x="4" y="2" width="4" height="2" fill="#c8dcf4"/><rect x="4" y="4" width="4" height="1" fill="#3a3428"/></svg>
<span style="left:946.4px;top:140px;font-size:12px;transform:scaleX(0.9022214049926889);transform-origin:0 0;">Đã xuất hàng</span>
<svg style="left:1024px;top:142px;shape-rendering:crispEdges" width="9" height="7"><rect x="0" y="3" width="3" height="1" fill="#000"/><rect x="3" y="0" width="1" height="7" fill="#000"/><rect x="4" y="1" width="5" height="5" fill="#000"/><rect x="4" y="2" width="4" height="2" fill="#c8dcf4"/><rect x="4" y="4" width="4" height="1" fill="#3a3428"/></svg>
<span style="left:1100.9px;top:140px;font-size:12px;transform:scaleX(0.8800173863617367);transform-origin:0 0;">Loại chứng từ</span>
<svg style="left:1234px;top:142px;shape-rendering:crispEdges" width="9" height="7"><rect x="0" y="3" width="3" height="1" fill="#000"/><rect x="3" y="0" width="1" height="7" fill="#000"/><rect x="4" y="1" width="5" height="5" fill="#000"/><rect x="4" y="2" width="4" height="2" fill="#c8dcf4"/><rect x="4" y="4" width="4" height="1" fill="#3a3428"/></svg>
<span style="left:1248px;top:140px;font-size:12px;transform:scaleX(0.8868196430550936);transform-origin:0 0;">Số chứng từ (Sổ QT)</span>
<svg style="left:1354px;top:142px;shape-rendering:crispEdges" width="9" height="7"><rect x="0" y="3" width="3" height="1" fill="#000"/><rect x="3" y="0" width="1" height="7" fill="#000"/><rect x="4" y="1" width="5" height="5" fill="#000"/><rect x="4" y="2" width="4" height="2" fill="#c8dcf4"/><rect x="4" y="4" width="4" height="1" fill="#3a3428"/></svg>
<div style="left:182px;top:156px;width:1183px;height:19px;background:#fffde3"></div>
<div style="left:182px;top:175px;width:1182px;height:1px;background:repeating-linear-gradient(90deg,#a8a8a8 0 1px,transparent 1px 2px)"></div>
<div style="left:182px;top:195px;width:1182px;height:1px;background:repeating-linear-gradient(90deg,#a8a8a8 0 1px,transparent 1px 2px)"></div>
<div style="left:182px;top:215px;width:1182px;height:1px;background:repeating-linear-gradient(90deg,#a8a8a8 0 1px,transparent 1px 2px)"></div>
<div style="left:182px;top:235px;width:1182px;height:1px;background:repeating-linear-gradient(90deg,#a8a8a8 0 1px,transparent 1px 2px)"></div>
<div style="left:182px;top:255px;width:1182px;height:1px;background:repeating-linear-gradient(90deg,#a8a8a8 0 1px,transparent 1px 2px)"></div>
<div style="left:182px;top:275px;width:1182px;height:1px;background:repeating-linear-gradient(90deg,#a8a8a8 0 1px,transparent 1px 2px)"></div>
<div style="left:182px;top:295px;width:1182px;height:1px;background:repeating-linear-gradient(90deg,#a8a8a8 0 1px,transparent 1px 2px)"></div>
<div style="left:182px;top:315px;width:1182px;height:1px;background:repeating-linear-gradient(90deg,#a8a8a8 0 1px,transparent 1px 2px)"></div>
<div style="left:182px;top:335px;width:1182px;height:1px;background:repeating-linear-gradient(90deg,#a8a8a8 0 1px,transparent 1px 2px)"></div>
<div style="left:182px;top:355px;width:1182px;height:1px;background:repeating-linear-gradient(90deg,#a8a8a8 0 1px,transparent 1px 2px)"></div>
<div style="left:182px;top:375px;width:1182px;height:1px;background:repeating-linear-gradient(90deg,#a8a8a8 0 1px,transparent 1px 2px)"></div>
<div style="left:182px;top:395px;width:1182px;height:1px;background:repeating-linear-gradient(90deg,#a8a8a8 0 1px,transparent 1px 2px)"></div>
<div style="left:182px;top:415px;width:1182px;height:1px;background:repeating-linear-gradient(90deg,#a8a8a8 0 1px,transparent 1px 2px)"></div>
<div style="left:182px;top:295px;width:1183px;height:21px;background:#fff2cc"></div>
<div style="left:281px;top:156px;width:1px;height:269px;background:repeating-linear-gradient(180deg,#a8a8a8 0 1px,transparent 1px 2px)"></div>
<div style="left:376px;top:156px;width:1px;height:269px;background:repeating-linear-gradient(180deg,#a8a8a8 0 1px,transparent 1px 2px)"></div>
<div style="left:496px;top:156px;width:1px;height:269px;background:#808080"></div>
<div style="left:574px;top:156px;width:1px;height:269px;background:repeating-linear-gradient(180deg,#a8a8a8 0 1px,transparent 1px 2px)"></div>
<div style="left:694px;top:156px;width:1px;height:269px;background:repeating-linear-gradient(180deg,#a8a8a8 0 1px,transparent 1px 2px)"></div>
<div style="left:814px;top:156px;width:1px;height:269px;background:repeating-linear-gradient(180deg,#a8a8a8 0 1px,transparent 1px 2px)"></div>
<div style="left:934px;top:156px;width:1px;height:269px;background:repeating-linear-gradient(180deg,#a8a8a8 0 1px,transparent 1px 2px)"></div>
<div style="left:1034px;top:156px;width:1px;height:269px;background:repeating-linear-gradient(180deg,#a8a8a8 0 1px,transparent 1px 2px)"></div>
<div style="left:1244px;top:156px;width:1px;height:269px;background:repeating-linear-gradient(180deg,#a8a8a8 0 1px,transparent 1px 2px)"></div>
<div style="left:182px;top:176px;width:1px;height:249px;background:repeating-linear-gradient(180deg,#a8a8a8 0 1px,transparent 1px 2px)"></div>
<div style="left:1364px;top:156px;width:1px;height:269px;background:repeating-linear-gradient(180deg,#a8a8a8 0 1px,transparent 1px 2px)"></div>
<div style="left:183px;top:296px;width:1181px;height:1px;background:repeating-linear-gradient(90deg,#000 0 1px,transparent 1px 2px)"></div>
<div style="left:183px;top:314px;width:1181px;height:1px;background:repeating-linear-gradient(90deg,#000 0 1px,transparent 1px 2px)"></div>
<div style="left:183px;top:296px;width:1px;height:19px;background:repeating-linear-gradient(180deg,#000 0 1px,transparent 1px 2px)"></div>
<div style="left:187px;top:164px;width:8px;height:1px;background:#2a2a5a"></div>
<div style="left:187px;top:166px;width:8px;height:1px;background:#2a2a5a"></div>
<div style="left:200px;top:157px;width:1px;height:18px;background:repeating-linear-gradient(180deg,#a8a8a8 0 1px,transparent 1px 2px)"></div>
<div style="left:287px;top:164px;width:8px;height:1px;background:#2a2a5a"></div>
<div style="left:287px;top:166px;width:8px;height:1px;background:#2a2a5a"></div>
<div style="left:300px;top:157px;width:1px;height:18px;background:repeating-linear-gradient(180deg,#a8a8a8 0 1px,transparent 1px 2px)"></div>
<svg style="left:380px;top:159px;shape-rendering:crispEdges" width="12" height="12"><rect x=".5" y=".5" width="11" height="11" fill="#fff" stroke="#2a2a5a"/><rect x="3" y="3" width="6" height="6" fill="#6a6ad8"/></svg>
<div style="left:394px;top:157px;width:1px;height:18px;background:repeating-linear-gradient(180deg,#a8a8a8 0 1px,transparent 1px 2px)"></div>
<svg style="left:580px;top:161px" width="9" height="9"><path d="M8 1L1 4.5L8 7" stroke="#2a2a5a" fill="none" stroke-width="1.2"/><path d="M0 8.5H8.5" stroke="#2a2a5a"/></svg>
<div style="left:592px;top:157px;width:1px;height:18px;background:repeating-linear-gradient(180deg,#a8a8a8 0 1px,transparent 1px 2px)"></div>
<svg style="left:700px;top:161px" width="9" height="9"><path d="M8 1L1 4.5L8 7" stroke="#2a2a5a" fill="none" stroke-width="1.2"/><path d="M0 8.5H8.5" stroke="#2a2a5a"/></svg>
<div style="left:712px;top:157px;width:1px;height:18px;background:repeating-linear-gradient(180deg,#a8a8a8 0 1px,transparent 1px 2px)"></div>
<svg style="left:818px;top:159px;shape-rendering:crispEdges" width="12" height="12"><rect x=".5" y=".5" width="11" height="11" fill="#fff" stroke="#2a2a5a"/><rect x="3" y="3" width="6" height="6" fill="#6a6ad8"/></svg>
<div style="left:832px;top:157px;width:1px;height:18px;background:repeating-linear-gradient(180deg,#a8a8a8 0 1px,transparent 1px 2px)"></div>
<svg style="left:938px;top:159px;shape-rendering:crispEdges" width="12" height="12"><rect x=".5" y=".5" width="11" height="11" fill="#fff" stroke="#2a2a5a"/><rect x="3" y="3" width="6" height="6" fill="#6a6ad8"/></svg>
<div style="left:952px;top:157px;width:1px;height:18px;background:repeating-linear-gradient(180deg,#a8a8a8 0 1px,transparent 1px 2px)"></div>
<svg style="left:1038px;top:159px;shape-rendering:crispEdges" width="12" height="12"><rect x=".5" y=".5" width="11" height="11" fill="#fff" stroke="#2a2a5a"/><rect x="3" y="3" width="6" height="6" fill="#6a6ad8"/></svg>
<div style="left:1052px;top:157px;width:1px;height:18px;background:repeating-linear-gradient(180deg,#a8a8a8 0 1px,transparent 1px 2px)"></div>
<svg style="left:1248px;top:159px;shape-rendering:crispEdges" width="12" height="12"><rect x=".5" y=".5" width="11" height="11" fill="#fff" stroke="#2a2a5a"/><rect x="3" y="3" width="6" height="6" fill="#6a6ad8"/></svg>
<div style="left:1262px;top:157px;width:1px;height:18px;background:repeating-linear-gradient(180deg,#a8a8a8 0 1px,transparent 1px 2px)"></div>
<span style="left:181px;width:100px;top:180px;font-size:12px;text-align:center;transform:scaleX(0.9);transform-origin:50% 0">07/02/2020</span>
<span style="left:281px;width:95px;top:180px;font-size:12px;text-align:center;transform:scaleX(0.9);transform-origin:50% 0">07/02/2020</span>
<span style="left:383px;top:180px;font-size:12px;transform:scaleX(0.9);transform-origin:0 0;">BH00023</span>
<span style="right:795px;top:180px;font-size:12px;transform:scaleX(0.9);transform-origin:100% 0;">0</span>
<span style="right:675px;top:180px;font-size:12px;transform:scaleX(0.9);transform-origin:100% 0;">786.094</span>
<span style="right:555px;top:180px;font-size:12px;transform:scaleX(0.9);transform-origin:100% 0;">8.647.030</span>
<span style="left:820px;top:180px;font-size:12px;transform:scaleX(0.9);transform-origin:0 0;">Đã lập</span>
<span style="left:940px;top:180px;font-size:12px;transform:scaleX(0.9);transform-origin:0 0;">Chưa xuất</span>
<span style="left:1040.5px;top:179px;font-size:12px;transform:scaleX(0.9);transform-origin:0 0;">Bán hàng hóa, dịch vụ trong nước chưa</span>
<span style="left:1250.4px;top:180px;font-size:12px;transform:scaleX(0.9);transform-origin:0 0;">BH00032</span>
<span style="left:181px;width:100px;top:200px;font-size:12px;text-align:center;transform:scaleX(0.9);transform-origin:50% 0">29/02/2020</span>
<span style="left:281px;width:95px;top:200px;font-size:12px;text-align:center;transform:scaleX(0.9);transform-origin:50% 0">29/02/2020</span>
<span style="left:383px;top:200px;font-size:12px;transform:scaleX(0.9);transform-origin:0 0;">BH00029</span>
<span style="right:795px;top:200px;font-size:12px;transform:scaleX(0.9);transform-origin:100% 0;">0</span>
<span style="right:675px;top:200px;font-size:12px;transform:scaleX(0.9);transform-origin:100% 0;">68.076.658</span>
<span style="right:555px;top:200px;font-size:12px;transform:scaleX(0.9);transform-origin:100% 0;">748.843.235</span>
<span style="left:820px;top:200px;font-size:12px;transform:scaleX(0.9);transform-origin:0 0;">Đã lập</span>
<span style="left:940px;top:200px;font-size:12px;transform:scaleX(0.9);transform-origin:0 0;">Đã xuất</span>
<span style="left:1040.5px;top:199px;font-size:12px;transform:scaleX(0.9);transform-origin:0 0;">Bán hàng hóa, dịch vụ trong nước chưa</span>
<span style="left:1250.4px;top:200px;font-size:12px;transform:scaleX(0.9);transform-origin:0 0;">BH00025</span>
<span style="left:181px;width:100px;top:220px;font-size:12px;text-align:center;transform:scaleX(0.9);transform-origin:50% 0">29/02/2020</span>
<span style="left:281px;width:95px;top:220px;font-size:12px;text-align:center;transform:scaleX(0.9);transform-origin:50% 0">29/02/2020</span>
<span style="left:383px;top:220px;font-size:12px;transform:scaleX(0.9);transform-origin:0 0;">BH00028</span>
<span style="right:795px;top:220px;font-size:12px;transform:scaleX(0.9);transform-origin:100% 0;">0</span>
<span style="right:675px;top:220px;font-size:12px;transform:scaleX(0.9);transform-origin:100% 0;">18.162.696</span>
<span style="right:555px;top:220px;font-size:12px;transform:scaleX(0.9);transform-origin:100% 0;">199.789.658</span>
<span style="left:820px;top:220px;font-size:12px;transform:scaleX(0.9);transform-origin:0 0;">Đã lập</span>
<span style="left:940px;top:220px;font-size:12px;transform:scaleX(0.9);transform-origin:0 0;">Đã xuất</span>
<span style="left:1040.5px;top:219px;font-size:12px;transform:scaleX(0.9);transform-origin:0 0;">Bán hàng hóa, dịch vụ trong nước chưa</span>
<span style="left:1250.4px;top:220px;font-size:12px;transform:scaleX(0.9);transform-origin:0 0;">BH00023</span>
<span style="left:181px;width:100px;top:240px;font-size:12px;text-align:center;transform:scaleX(0.9);transform-origin:50% 0">29/02/2020</span>
<span style="left:281px;width:95px;top:240px;font-size:12px;text-align:center;transform:scaleX(0.9);transform-origin:50% 0">29/02/2020</span>
<span style="left:383px;top:240px;font-size:12px;transform:scaleX(0.9);transform-origin:0 0;">BH00027</span>
<span style="right:795px;top:240px;font-size:12px;transform:scaleX(0.9);transform-origin:100% 0;">0</span>
<span style="right:675px;top:240px;font-size:12px;transform:scaleX(0.9);transform-origin:100% 0;">29.295.066</span>
<span style="right:555px;top:240px;font-size:12px;transform:scaleX(0.9);transform-origin:100% 0;">322.245.726</span>
<span style="left:820px;top:240px;font-size:12px;transform:scaleX(0.9);transform-origin:0 0;">Đã lập</span>
<span style="left:940px;top:240px;font-size:12px;transform:scaleX(0.9);transform-origin:0 0;">Đã xuất</span>
<span style="left:1040.5px;top:239px;font-size:12px;transform:scaleX(0.9);transform-origin:0 0;">Bán hàng hóa, dịch vụ trong nước chưa</span>
<span style="left:1250.4px;top:240px;font-size:12px;transform:scaleX(0.9);transform-origin:0 0;">BH00024</span>
<span style="left:181px;width:100px;top:260px;font-size:12px;text-align:center;transform:scaleX(0.9);transform-origin:50% 0">12/02/2020</span>
<span style="left:281px;width:95px;top:260px;font-size:12px;text-align:center;transform:scaleX(0.9);transform-origin:50% 0">12/02/2020</span>
<span style="left:383px;top:260px;font-size:12px;transform:scaleX(0.9);transform-origin:0 0;">BH00026</span>
<span style="right:795px;top:260px;font-size:12px;transform:scaleX(0.9);transform-origin:100% 0;">0</span>
<span style="right:675px;top:260px;font-size:12px;transform:scaleX(0.9);transform-origin:100% 0;">15.091.220</span>
<span style="right:555px;top:260px;font-size:12px;transform:scaleX(0.9);transform-origin:100% 0;">166.003.420</span>
<span style="left:820px;top:260px;font-size:12px;transform:scaleX(0.9);transform-origin:0 0;">Đã lập</span>
<span style="left:940px;top:260px;font-size:12px;transform:scaleX(0.9);transform-origin:0 0;">Chưa xuất</span>
<span style="left:1040.5px;top:259px;font-size:12px;transform:scaleX(0.9);transform-origin:0 0;">Bán hàng hóa, dịch vụ trong nước chưa</span>
<span style="left:1250.4px;top:260px;font-size:12px;transform:scaleX(0.9);transform-origin:0 0;">BH00030</span>
<span style="left:181px;width:100px;top:280px;font-size:12px;text-align:center;transform:scaleX(0.9);transform-origin:50% 0">10/02/2020</span>
<span style="left:281px;width:95px;top:280px;font-size:12px;text-align:center;transform:scaleX(0.9);transform-origin:50% 0">10/02/2020</span>
<span style="left:383px;top:280px;font-size:12px;transform:scaleX(0.9);transform-origin:0 0;">BH00025</span>
<span style="right:795px;top:280px;font-size:12px;transform:scaleX(0.9);transform-origin:100% 0;">0</span>
<span style="right:675px;top:280px;font-size:12px;transform:scaleX(0.9);transform-origin:100% 0;">36.014.660</span>
<span style="right:555px;top:280px;font-size:12px;transform:scaleX(0.9);transform-origin:100% 0;">396.161.260</span>
<span style="left:820px;top:280px;font-size:12px;transform:scaleX(0.9);transform-origin:0 0;">Đã lập</span>
<span style="left:940px;top:280px;font-size:12px;transform:scaleX(0.9);transform-origin:0 0;">Chưa xuất</span>
<span style="left:1040.5px;top:279px;font-size:12px;transform:scaleX(0.9);transform-origin:0 0;">Bán hàng hóa, dịch vụ trong nước chưa</span>
<span style="left:1250.4px;top:280px;font-size:12px;transform:scaleX(0.9);transform-origin:0 0;">BH00029</span>
<span style="left:181px;width:100px;top:300px;font-size:12px;text-align:center;transform:scaleX(0.9);transform-origin:50% 0">07/02/2020</span>
<span style="left:281px;width:95px;top:300px;font-size:12px;text-align:center;transform:scaleX(0.9);transform-origin:50% 0">07/02/2020</span>
<span style="left:383px;top:300px;font-size:12px;transform:scaleX(0.9);transform-origin:0 0;">BH00024</span>
<span style="right:795px;top:300px;font-size:12px;transform:scaleX(0.9);transform-origin:100% 0;">0</span>
<span style="right:675px;top:300px;font-size:12px;transform:scaleX(0.9);transform-origin:100% 0;">7.108.283</span>
<span style="right:555px;top:300px;font-size:12px;transform:scaleX(0.9);transform-origin:100% 0;">78.191.117</span>
<span style="left:820px;top:300px;font-size:12px;transform:scaleX(0.9);transform-origin:0 0;">Đã lập</span>
<span style="left:940px;top:300px;font-size:12px;transform:scaleX(0.9);transform-origin:0 0;">Chưa xuất</span>
<span style="left:1040.5px;top:299px;font-size:12px;transform:scaleX(0.9);transform-origin:0 0;">Bán hàng hóa, dịch vụ trong nước chưa</span>
<span style="left:1250.4px;top:300px;font-size:12px;transform:scaleX(0.9);transform-origin:0 0;">BH00028</span>
<div style="left:182px;top:425px;width:1183px;height:1px;background:#7ea6d6"></div>
<div style="left:182px;top:426px;width:1183px;height:16px;background:#f0f0f0"></div>
<div style="left:183px;top:426px;width:98px;height:16px;background:#d4d4d4"></div>
<div style="left:281px;top:426px;width:1px;height:16px;background:#7ea6d6"></div>
<div style="left:497px;top:426px;width:77px;height:16px;background:#d4d4d4"></div>
<div style="left:574px;top:426px;width:1px;height:16px;background:#7ea6d6"></div>
<div style="left:575px;top:426px;width:119px;height:16px;background:#d4d4d4"></div>
<div style="left:694px;top:426px;width:1px;height:16px;background:#7ea6d6"></div>
<div style="left:695px;top:426px;width:119px;height:16px;background:#d4d4d4"></div>
<div style="left:814px;top:426px;width:1px;height:16px;background:#7ea6d6"></div>
<div style="left:281px;top:426px;width:1px;height:16px;background:#7ea6d6"></div>
<div style="left:496px;top:426px;width:1px;height:16px;background:#7ea6d6"></div>
<div style="left:574px;top:426px;width:1px;height:16px;background:#7ea6d6"></div>
<div style="left:694px;top:426px;width:1px;height:16px;background:#7ea6d6"></div>
<div style="left:814px;top:426px;width:1px;height:16px;background:#7ea6d6"></div>
<span style="left:187px;top:428px;font-size:12px;transform:scaleX(0.9);transform-origin:0 0;">Số dòng = 7</span>
<span style="right:795px;top:428px;font-size:12px;transform:scaleX(0.9);transform-origin:100% 0;">0</span>
<span style="right:675px;top:428px;font-size:12px;transform:scaleX(0.9);transform-origin:100% 0;">174.534.677</span>
<span style="right:555px;top:428px;font-size:12px;transform:scaleX(0.9);transform-origin:100% 0;">1.919.881.446</span>
<div style="left:182px;top:442px;width:1183px;height:1px;background:#7ea6d6"></div>
<div style="left:182px;top:443px;width:1183px;height:17px;background:#adc8e8"></div>
<div style="left:199px;top:443px;width:538px;height:17px;background:#d4d4d4"></div>
<svg style="left:187px;top:447px" width="6" height="9"><path d="M5 0V8.5L.5 4.25Z" fill="#000"/></svg>
<svg style="left:1355px;top:447px" width="6" height="9"><path d="M.5 0V8.5L5 4.25Z" fill="#000"/></svg>
<div style="left:748px;top:461px;width:50px;height:6px;background:#adc8e8;border:1px solid #7ea6d6;border-top:none"></div>
<svg style="left:770px;top:462px" width="7" height="4"><path d="M0 0H6L3 3.5Z" fill="#fff"/></svg>
<div style="left:181px;top:467px;width:61px;height:20px;background:#ffe39a;border:1px solid #7ea6d6;border-bottom:none"></div>
<span class="b" style="left:193px;top:470px;font-size:11.6px">Chi tiết</span>
<div style="left:181px;top:486px;width:1185px;height:216px;background:#fff;border:1px solid #7ea6d6"></div>
<div style="left:182px;top:487px;width:1183px;height:19px;background:#adc8e8"></div>
<div style="left:182px;top:506px;width:1183px;height:1px;background:#7ea6d6"></div>
<div style="left:301px;top:487px;width:1px;height:19px;background:#7ea6d6"></div>
<div style="left:511px;top:487px;width:1px;height:19px;background:#7ea6d6"></div>
<div style="left:631px;top:487px;width:1px;height:19px;background:#7ea6d6"></div>
<div style="left:726px;top:487px;width:1px;height:19px;background:#7ea6d6"></div>
<div style="left:806px;top:487px;width:1px;height:19px;background:#7ea6d6"></div>
<div style="left:916px;top:487px;width:1px;height:19px;background:#7ea6d6"></div>
<div style="left:1026px;top:487px;width:1px;height:19px;background:#7ea6d6"></div>
<div style="left:1146px;top:487px;width:1px;height:19px;background:#7ea6d6"></div>
<div style="left:1226px;top:487px;width:1px;height:19px;background:#7ea6d6"></div>
<div style="left:1346px;top:487px;width:1px;height:19px;background:#7ea6d6"></div>
<span style="left:215px;top:491px;font-size:12px;transform:scaleX(0.9637006103437199);transform-origin:0 0;">Mã hàng</span>
<svg style="left:292px;top:492px;shape-rendering:crispEdges" width="7" height="9"><rect x="1" y="0" width="5" height="5" fill="#000"/><rect x="2" y="1" width="2" height="4" fill="#c8dcf4"/><rect x="4" y="1" width="1" height="4" fill="#3a3428"/><rect x="0" y="5" width="7" height="1" fill="#000"/><rect x="3" y="6" width="1" height="3" fill="#000"/></svg>
<span style="left:378.5px;top:491px;font-size:12px;transform:scaleX(0.895430395818695);transform-origin:0 0;">Tên hàng</span>
<svg style="left:501px;top:493px;shape-rendering:crispEdges" width="9" height="7"><rect x="0" y="3" width="3" height="1" fill="#000"/><rect x="3" y="0" width="1" height="7" fill="#000"/><rect x="4" y="1" width="5" height="5" fill="#000"/><rect x="4" y="2" width="4" height="2" fill="#c8dcf4"/><rect x="4" y="4" width="4" height="1" fill="#3a3428"/></svg>
<span style="left:519.7px;top:491px;font-size:12px;transform:scaleX(0.9116049382716049);transform-origin:0 0;">TK công nợ/chi phí</span>
<svg style="left:621px;top:493px;shape-rendering:crispEdges" width="9" height="7"><rect x="0" y="3" width="3" height="1" fill="#000"/><rect x="3" y="0" width="1" height="7" fill="#000"/><rect x="4" y="1" width="5" height="5" fill="#000"/><rect x="4" y="2" width="4" height="2" fill="#c8dcf4"/><rect x="4" y="4" width="4" height="1" fill="#3a3428"/></svg>
<span style="left:641px;top:491px;font-size:12px;transform:scaleX(0.9021904142268489);transform-origin:0 0;">TK doanh thu</span>
<svg style="left:716px;top:493px;shape-rendering:crispEdges" width="9" height="7"><rect x="0" y="3" width="3" height="1" fill="#000"/><rect x="3" y="0" width="1" height="7" fill="#000"/><rect x="4" y="1" width="5" height="5" fill="#000"/><rect x="4" y="2" width="4" height="2" fill="#c8dcf4"/><rect x="4" y="4" width="4" height="1" fill="#3a3428"/></svg>
<span style="left:749.8px;top:491px;font-size:12px;transform:scaleX(0.8833333333333333);transform-origin:0 0;">ĐVT</span>
<svg style="left:796px;top:493px;shape-rendering:crispEdges" width="9" height="7"><rect x="0" y="3" width="3" height="1" fill="#000"/><rect x="3" y="0" width="1" height="7" fill="#000"/><rect x="4" y="1" width="5" height="5" fill="#000"/><rect x="4" y="2" width="4" height="2" fill="#c8dcf4"/><rect x="4" y="4" width="4" height="1" fill="#3a3428"/></svg>
<span style="left:835px;top:491px;font-size:12px;transform:scaleX(0.8612811557191322);transform-origin:0 0;">Số lượng</span>
<svg style="left:906px;top:493px;shape-rendering:crispEdges" width="9" height="7"><rect x="0" y="3" width="3" height="1" fill="#000"/><rect x="3" y="0" width="1" height="7" fill="#000"/><rect x="4" y="1" width="5" height="5" fill="#000"/><rect x="4" y="2" width="4" height="2" fill="#c8dcf4"/><rect x="4" y="4" width="4" height="1" fill="#3a3428"/></svg>
<span style="left:947px;top:491px;font-size:12px;transform:scaleX(0.7519680413582422);transform-origin:0 0;">Đơn giá</span>
<svg style="left:1016px;top:493px;shape-rendering:crispEdges" width="9" height="7"><rect x="0" y="3" width="3" height="1" fill="#000"/><rect x="3" y="0" width="1" height="7" fill="#000"/><rect x="4" y="1" width="5" height="5" fill="#000"/><rect x="4" y="2" width="4" height="2" fill="#c8dcf4"/><rect x="4" y="4" width="4" height="1" fill="#3a3428"/></svg>
<span style="left:1054.9px;top:491px;font-size:12px;transform:scaleX(0.9276589178047463);transform-origin:0 0;">Thành tiền</span>
<svg style="left:1136px;top:493px;shape-rendering:crispEdges" width="9" height="7"><rect x="0" y="3" width="3" height="1" fill="#000"/><rect x="3" y="0" width="1" height="7" fill="#000"/><rect x="4" y="1" width="5" height="5" fill="#000"/><rect x="4" y="2" width="4" height="2" fill="#c8dcf4"/><rect x="4" y="4" width="4" height="1" fill="#3a3428"/></svg>
<span style="left:1148px;top:491px;font-size:12px;transform:scaleX(0.9455534722988125);transform-origin:0 0;">Tỷ lệ CK (%)</span>
<svg style="left:1216px;top:493px;shape-rendering:crispEdges" width="9" height="7"><rect x="0" y="3" width="3" height="1" fill="#000"/><rect x="3" y="0" width="1" height="7" fill="#000"/><rect x="4" y="1" width="5" height="5" fill="#000"/><rect x="4" y="2" width="4" height="2" fill="#c8dcf4"/><rect x="4" y="4" width="4" height="1" fill="#3a3428"/></svg>
<span style="left:1242.6px;top:491px;font-size:12px;transform:scaleX(0.9440184108302636);transform-origin:0 0;">Tiền chiết khấu</span>
<svg style="left:1336px;top:493px;shape-rendering:crispEdges" width="9" height="7"><rect x="0" y="3" width="3" height="1" fill="#000"/><rect x="3" y="0" width="1" height="7" fill="#000"/><rect x="4" y="1" width="5" height="5" fill="#000"/><rect x="4" y="2" width="4" height="2" fill="#c8dcf4"/><rect x="4" y="4" width="4" height="1" fill="#3a3428"/></svg>
<span style="left:1354.2px;top:491px;font-size:12px;transform:scaleX(0.9130186679709791);transform-origin:0 0;">TK</span>
<div style="left:182px;top:526px;width:1182px;height:1px;background:repeating-linear-gradient(90deg,#a8a8a8 0 1px,transparent 1px 2px)"></div>
<div style="left:182px;top:546px;width:1182px;height:1px;background:repeating-linear-gradient(90deg,#a8a8a8 0 1px,transparent 1px 2px)"></div>
<div style="left:182px;top:566px;width:1182px;height:1px;background:repeating-linear-gradient(90deg,#a8a8a8 0 1px,transparent 1px 2px)"></div>
<div style="left:182px;top:586px;width:1182px;height:1px;background:repeating-linear-gradient(90deg,#a8a8a8 0 1px,transparent 1px 2px)"></div>
<div style="left:182px;top:606px;width:1182px;height:1px;background:repeating-linear-gradient(90deg,#a8a8a8 0 1px,transparent 1px 2px)"></div>
<div style="left:182px;top:626px;width:1182px;height:1px;background:repeating-linear-gradient(90deg,#a8a8a8 0 1px,transparent 1px 2px)"></div>
<div style="left:182px;top:646px;width:1182px;height:1px;background:repeating-linear-gradient(90deg,#a8a8a8 0 1px,transparent 1px 2px)"></div>
<div style="left:301px;top:507px;width:1px;height:159px;background:#808080"></div>
<div style="left:511px;top:507px;width:1px;height:159px;background:repeating-linear-gradient(180deg,#a8a8a8 0 1px,transparent 1px 2px)"></div>
<div style="left:631px;top:507px;width:1px;height:159px;background:repeating-linear-gradient(180deg,#a8a8a8 0 1px,transparent 1px 2px)"></div>
<div style="left:726px;top:507px;width:1px;height:159px;background:repeating-linear-gradient(180deg,#a8a8a8 0 1px,transparent 1px 2px)"></div>
<div style="left:806px;top:507px;width:1px;height:159px;background:repeating-linear-gradient(180deg,#a8a8a8 0 1px,transparent 1px 2px)"></div>
<div style="left:916px;top:507px;width:1px;height:159px;background:repeating-linear-gradient(180deg,#a8a8a8 0 1px,transparent 1px 2px)"></div>
<div style="left:1026px;top:507px;width:1px;height:159px;background:repeating-linear-gradient(180deg,#a8a8a8 0 1px,transparent 1px 2px)"></div>
<div style="left:1146px;top:507px;width:1px;height:159px;background:repeating-linear-gradient(180deg,#a8a8a8 0 1px,transparent 1px 2px)"></div>
<div style="left:1226px;top:507px;width:1px;height:159px;background:repeating-linear-gradient(180deg,#a8a8a8 0 1px,transparent 1px 2px)"></div>
<div style="left:1346px;top:507px;width:1px;height:159px;background:repeating-linear-gradient(180deg,#a8a8a8 0 1px,transparent 1px 2px)"></div>
<div style="left:182px;top:507px;width:1px;height:159px;background:repeating-linear-gradient(180deg,#a8a8a8 0 1px,transparent 1px 2px)"></div>
<div style="left:1364px;top:507px;width:1px;height:159px;background:repeating-linear-gradient(180deg,#a8a8a8 0 1px,transparent 1px 2px)"></div>
<span style="left:188px;top:511px;font-size:12px;transform:scaleX(0.9);transform-origin:0 0;">HH0001</span>
<span style="left:307.5px;top:511px;font-size:12px;transform:scaleX(0.9);transform-origin:0 0;">Chân đế</span>
<span style="left:518px;top:511px;font-size:12px;transform:scaleX(0.9);transform-origin:0 0;">131</span>
<span style="left:636.5px;top:511px;font-size:12px;transform:scaleX(0.9);transform-origin:0 0;">5111</span>
<span style="left:732px;top:511px;font-size:12px;transform:scaleX(0.9);transform-origin:0 0;">Cái</span>
<span style="right:453px;top:511px;font-size:12px;transform:scaleX(0.9);transform-origin:100% 0;">1.198,0000</span>
<span style="right:343.5px;top:511px;font-size:12px;transform:scaleX(0.9);transform-origin:100% 0;">43.968,0000</span>
<span style="right:223px;top:511px;font-size:12px;transform:scaleX(0.9);transform-origin:100% 0;">52.673.664</span>
<span style="right:143.29999999999995px;top:511px;font-size:12px;transform:scaleX(0.9);transform-origin:100% 0;">0,00</span>
<span style="right:23px;top:511px;font-size:12px;transform:scaleX(0.9);transform-origin:100% 0;">0</span>
<span style="left:1352.4px;top:511px;font-size:12px;transform:scaleX(0.9);transform-origin:0 0;">52</span>
<span style="left:188px;top:531px;font-size:12px;transform:scaleX(0.9);transform-origin:0 0;">HH0002</span>
<span style="left:307.5px;top:531px;font-size:12px;transform:scaleX(0.9);transform-origin:0 0;">Khung hậu</span>
<span style="left:518px;top:531px;font-size:12px;transform:scaleX(0.9);transform-origin:0 0;">131</span>
<span style="left:636.5px;top:531px;font-size:12px;transform:scaleX(0.9);transform-origin:0 0;">5111</span>
<span style="left:732px;top:531px;font-size:12px;transform:scaleX(0.9);transform-origin:0 0;">Cái</span>
<span style="right:453px;top:531px;font-size:12px;transform:scaleX(0.9);transform-origin:100% 0;">860,0000</span>
<span style="right:343.5px;top:531px;font-size:12px;transform:scaleX(0.9);transform-origin:100% 0;">21.406,0116</span>
<span style="right:223px;top:531px;font-size:12px;transform:scaleX(0.9);transform-origin:100% 0;">18.409.170</span>
<span style="right:143.29999999999995px;top:531px;font-size:12px;transform:scaleX(0.9);transform-origin:100% 0;">0,00</span>
<span style="right:23px;top:531px;font-size:12px;transform:scaleX(0.9);transform-origin:100% 0;">0</span>
<span style="left:1352.4px;top:531px;font-size:12px;transform:scaleX(0.9);transform-origin:0 0;">52</span>
<div style="left:182px;top:666px;width:1183px;height:1px;background:#7ea6d6"></div>
<div style="left:182px;top:667px;width:1183px;height:16px;background:#f0f0f0"></div>
<div style="left:183px;top:667px;width:118px;height:16px;background:#d4d4d4"></div>
<div style="left:807px;top:667px;width:109px;height:16px;background:#d4d4d4"></div>
<div style="left:1027px;top:667px;width:119px;height:16px;background:#d4d4d4"></div>
<div style="left:1227px;top:667px;width:119px;height:16px;background:#d4d4d4"></div>
<div style="left:301px;top:667px;width:1px;height:16px;background:#7ea6d6"></div>
<div style="left:806px;top:667px;width:1px;height:16px;background:#7ea6d6"></div>
<div style="left:916px;top:667px;width:1px;height:16px;background:#7ea6d6"></div>
<div style="left:1026px;top:667px;width:1px;height:16px;background:#7ea6d6"></div>
<div style="left:1146px;top:667px;width:1px;height:16px;background:#7ea6d6"></div>
<div style="left:1226px;top:667px;width:1px;height:16px;background:#7ea6d6"></div>
<div style="left:1346px;top:667px;width:1px;height:16px;background:#7ea6d6"></div>
<span style="left:187px;top:669px;font-size:12px;transform:scaleX(0.9);transform-origin:0 0;">Số dòng = 2</span>
<span style="right:453px;top:669px;font-size:12px;transform:scaleX(0.9);transform-origin:100% 0;">2.058,0000</span>
<span style="right:223px;top:669px;font-size:12px;transform:scaleX(0.9);transform-origin:100% 0;">71.082.834</span>
<span style="right:23px;top:669px;font-size:12px;transform:scaleX(0.9);transform-origin:100% 0;">0</span>
<div style="left:182px;top:683px;width:1183px;height:1px;background:#7ea6d6"></div>
<div style="left:182px;top:684px;width:1183px;height:17px;background:#adc8e8"></div>
<div style="left:1169px;top:684px;width:180px;height:17px;background:#d4d4d4"></div>
<svg style="left:187px;top:688px" width="6" height="9"><path d="M5 0V8.5L.5 4.25Z" fill="#000"/></svg>
<svg style="left:1355px;top:688px" width="6" height="9"><path d="M.5 0V8.5L5 4.25Z" fill="#000"/></svg>
<div style="left:0px;top:702px;width:1366px;height:26px;background:#afc9e8"></div>
<div style="left:0px;top:702px;width:1366px;height:1px;background:#c4d7ee"></div>
<div style="left:3px;top:707px;width:182px;height:19px;border:1px solid #7ea6d6"></div>
<div style="left:188px;top:707px;width:182px;height:19px;border:1px solid #7ea6d6"></div>
<div style="left:373px;top:707px;width:148px;height:19px;border:1px solid #7ea6d6"></div>
<div style="left:524px;top:707px;width:10px;height:19px;border:1px solid #7ea6d6"></div>
<div style="left:536px;top:707px;width:381px;height:19px;border:1px solid #7ea6d6"></div>
<div style="left:920px;top:707px;width:181px;height:19px;border:1px solid #7ea6d6"></div>
<div style="left:1104px;top:707px;width:30px;height:19px;border:1px solid #7ea6d6"></div>
<div style="left:1137px;top:707px;width:31px;height:19px;border:1px solid #7ea6d6"></div>
<div style="left:1170px;top:707px;width:36px;height:19px;border:1px solid #7ea6d6"></div>
<div style="left:1209px;top:707px;width:36px;height:19px;border:1px solid #7ea6d6"></div>
<div style="left:1247px;top:707px;width:54px;height:19px;border:1px solid #7ea6d6"></div>
<div style="left:1303px;top:707px;width:60px;height:19px;border:1px solid #7ea6d6"></div>
<svg style="left:6px;top:708px" width="17" height="18"><path d="M3 2L13 1L14 14L4 15Z" fill="#c8c0e0" stroke="#7a70a8"/><circle cx="6" cy="12" r="4.5" fill="#3aa83a" stroke="#fff"/><path d="M3.8 12L5.5 13.8L8.5 10" stroke="#fff" fill="none" stroke-width="1.3"/></svg>
<span style="left:21.7px;top:711px;font-size:12px;transform:scaleX(0.9044);transform-origin:0 0">Máy chủ: TAIBT\MISASME2017</span>
<svg style="left:192px;top:709px" width="12" height="16"><ellipse cx="6" cy="3" rx="5.5" ry="2.5" fill="#f6d85a" stroke="#c8a018"/><path d="M.5 3V12.5A5.5 2.5 0 0 0 11.5 12.5V3" fill="#f2c838" stroke="#c8a018"/></svg>
<span style="left:206.6px;top:711px;font-size:12px;transform:scaleX(0.9178);transform-origin:0 0">Tên DLKT: KETOAN2019_2020</span>
<svg style="left:376px;top:708px" width="16" height="17"><circle cx="9" cy="5" r="3.5" fill="#f2c838" stroke="#a07a18"/><path d="M2 16Q3 9 9 9Q15 9 15 16Z" fill="#6aa8e8" stroke="#3a6ab8"/></svg>
<span style="left:392.2px;top:711px;font-size:12px;transform:scaleX(0.8833);transform-origin:0 0">Người dùng: 0918856138</span>
<span class="b" style="left:923px;top:711px;font-size:12px;transform:scaleX(0.9350);transform-origin:0 0">Tổng đài tư vấn: MISA SUPPORT</span>
<span style="left:1106.4px;top:711px;font-size:12px;transform:scaleX(0.9229);transform-origin:0 0">OVR</span>
<span style="left:1138.8px;top:711px;font-size:12px;transform:scaleX(0.9148);transform-origin:0 0">NUM</span>
<span style="left:1250.4px;top:711px;font-size:12px;transform:scaleX(0.8905);transform-origin:0 0">3:45 CH</span>
<span style="left:1306px;top:711px;font-size:12px;transform:scaleX(0.9092);transform-origin:0 0">26/03/2020</span>
<div style="left:0px;top:728px;width:1366px;height:40px;background:#0b0e15"></div>
<div style="left:490px;top:728px;width:48px;height:40px;background:#3a3c42"></div>
<div style="left:249px;top:766px;width:40px;height:2px;background:#7fb2e0"></div>
<div style="left:298px;top:766px;width:40px;height:2px;background:#7fb2e0"></div>
<div style="left:347px;top:766px;width:40px;height:2px;background:#7fb2e0"></div>
<div style="left:396px;top:766px;width:40px;height:2px;background:#7fb2e0"></div>
<div style="left:445px;top:766px;width:40px;height:2px;background:#7fb2e0"></div>
<div style="left:490px;top:766px;width:48px;height:2px;background:#8cc4f0"></div>
<svg style="left:16px;top:740px" width="17" height="16"><path d="M0 2.3L6.8 1.3V7.5H0ZM7.8 1.2L16.5 0V7.5H7.8ZM0 8.5H6.8V14.7L0 13.7ZM7.8 8.5H16.5V16L7.8 14.8Z" fill="#fff"/></svg>
<svg style="left:63px;top:739px" width="18" height="18"><circle cx="9" cy="9" r="7.2" fill="none" stroke="#fff" stroke-width="1.8"/></svg>
<svg style="left:111px;top:740px" width="18" height="16"><path d="M1 .5H11M1 15.5H11" stroke="#fff" stroke-width="1.2"/><rect x="1.5" y="3.5" width="9" height="9" fill="none" stroke="#fff" stroke-width="1.2"/><path d="M15 .5V4M15 6V10M15 12V15.5" stroke="#fff" stroke-width="1.5"/></svg>
<svg style="left:159px;top:736px" width="25" height="24"><path d="M0 8L12.5 0L25 8V23H0Z" fill="#0a62c8"/><path d="M2 7H23V16L12.5 21L2 16Z" fill="#f0f4f8"/><path d="M0 8L12.5 16L25 8V23H0Z" fill="#28a8ea"/><path d="M0 23L12.5 14L25 23Z" fill="#1490df"/></svg>
<svg style="left:209px;top:736px" width="23" height="23"><path d="M3 13Q3 2 12 2Q21 2 21 11V13H8Q8.5 18 13.5 18Q17 18 20 16V21Q17 23 12.5 23Q3 23 3 13ZM8 9.5H16Q15.5 6 12 6Q8.5 6 8 9.5Z" fill="#1a78d6"/><path d="M1 12Q2 5 9 3Q4 7 4 12Z" fill="#1a78d6"/></svg>
<svg style="left:258px;top:738px" width="22" height="20"><path d="M0 1H8L10 3H22V19H0Z" fill="#f2c94c"/><rect x="0" y="5" width="22" height="14" fill="#fddc7a"/><path d="M6 11H16V19H13V14H9V19H6Z" fill="#2a9ae8"/><rect x="6" y="11" width="10" height="2" fill="#1f7ac8"/></svg>
<svg style="left:305px;top:737px" width="25" height="22"><rect x="8" y="0" width="17" height="22" fill="#fff"/><path d="M10 4H23M10 8H23M10 12H23M10 16H23" stroke="#2b579a" stroke-width="1.5"/><path d="M0 2L14 0V22L0 20Z" fill="#2b579a"/><text x="7" y="15" font-size="10" font-weight="bold" fill="#fff" text-anchor="middle" font-family="Liberation Sans">W</text></svg>
<svg style="left:355px;top:737px" width="24" height="22"><rect x="8" y="1" width="16" height="20" fill="#fff"/><path d="M13 1V21M18 1V21M8 6H24M8 11H24M8 16H24" stroke="#217346" stroke-width="1.2"/><path d="M0 2L14 0V22L0 20Z" fill="#217346"/><text x="7" y="15" font-size="10" font-weight="bold" fill="#fff" text-anchor="middle" font-family="Liberation Sans">X</text></svg>
<svg style="left:403px;top:735px" width="26" height="26"><path d="M7 1H19Q25 1 25 7V18Q25 24 19 24H9L4 25L5 22Q1 20 1 16V7Q1 1 7 1Z" fill="#0068ff"/><path d="M7 1.5H19Q24.5 1.5 24.5 7V17Q24.5 22.5 19 22.5H9Q5 22.5 3.5 20Q2 18 2 14V7Q2 1.5 7 1.5Z" fill="#fff"/><text x="13.5" y="15.5" font-size="8.5" font-weight="bold" fill="#0a6cf0" text-anchor="middle" font-family="Liberation Sans">Zalo</text></svg>
<svg style="left:452px;top:736px" width="24" height="24"><circle cx="12" cy="12" r="11.5" fill="#db4437"/><path d="M12 12L2 6A11.5 11.5 0 0 0 9 23.2Z" fill="#0f9d58"/><path d="M12 12L9 23.2A11.5 11.5 0 0 0 23.5 12Z" fill="#ffcd40"/><circle cx="12" cy="12" r="5.2" fill="#fff"/><circle cx="12" cy="12" r="4.2" fill="#4285f4"/></svg>
<svg style="left:502px;top:737px" width="25" height="25" viewBox="0 0 17 17"><g transform="rotate(15 8 8)"><path d="M8 8L8 0A8 8 0 0 1 16 8Z" fill="#1fa85a"/><path d="M8 8L16 8A8 8 0 0 1 8 16Z" fill="#e8202a"/><path d="M8 8L8 16A8 8 0 0 1 0 8Z" fill="#fdb515"/><path d="M8 8L0 8A8 8 0 0 1 8 0Z" fill="#139ff0"/></g><circle cx="8" cy="7.5" r="2.6" fill="#fff"/></svg>
<svg style="left:1141px;top:744px" width="13" height="8"><path d="M1 7L6.5 1.5L12 7" stroke="#fff" fill="none" stroke-width="1.2"/></svg>
<svg style="left:1165px;top:741px" width="15" height="14"><path d="M1 13A12 12 0 0 1 13 1M4 13A9 9 0 0 1 13 4M7 13A6 6 0 0 1 13 7" stroke="#fff" fill="none" stroke-width="1.2"/><circle cx="12" cy="12" r="1.5" fill="#fff"/></svg>
<svg style="left:1186px;top:741px" width="19" height="16"><path d="M1.5 5H4.5L8.5 1.5V13.5L4.5 10H1.5Z" fill="none" stroke="#fff" stroke-width="1.1"/><circle cx="13.5" cy="11" r="4.2" fill="#e81123"/><path d="M11.6 9.1L15.4 12.9M15.4 9.1L11.6 12.9" stroke="#fff" stroke-width="1.2"/></svg>
<span style="left:1213px;top:742.5px;font-size:12px;transform:scaleX(0.8729);transform-origin:0 0;color:#fff">ENG</span>
<span style="left:1264.6px;top:734px;font-size:12px;transform:scaleX(0.8726);transform-origin:0 0;color:#fff">15:45</span>
<span style="left:1249px;top:750px;font-size:12.5px;transform:scaleX(0.9240);transform-origin:0 0;color:#fff">26/03/2020</span>
<svg style="left:1324px;top:740px" width="18" height="18"><path d="M1.5 1.5H16.5V13.5H11L9 16L7 13.5H1.5Z" fill="none" stroke="#fff" stroke-width="1.1"/></svg>
<div style="left:1361px;top:728px;width:1px;height:40px;background:#3a3c42"></div></body></html>
